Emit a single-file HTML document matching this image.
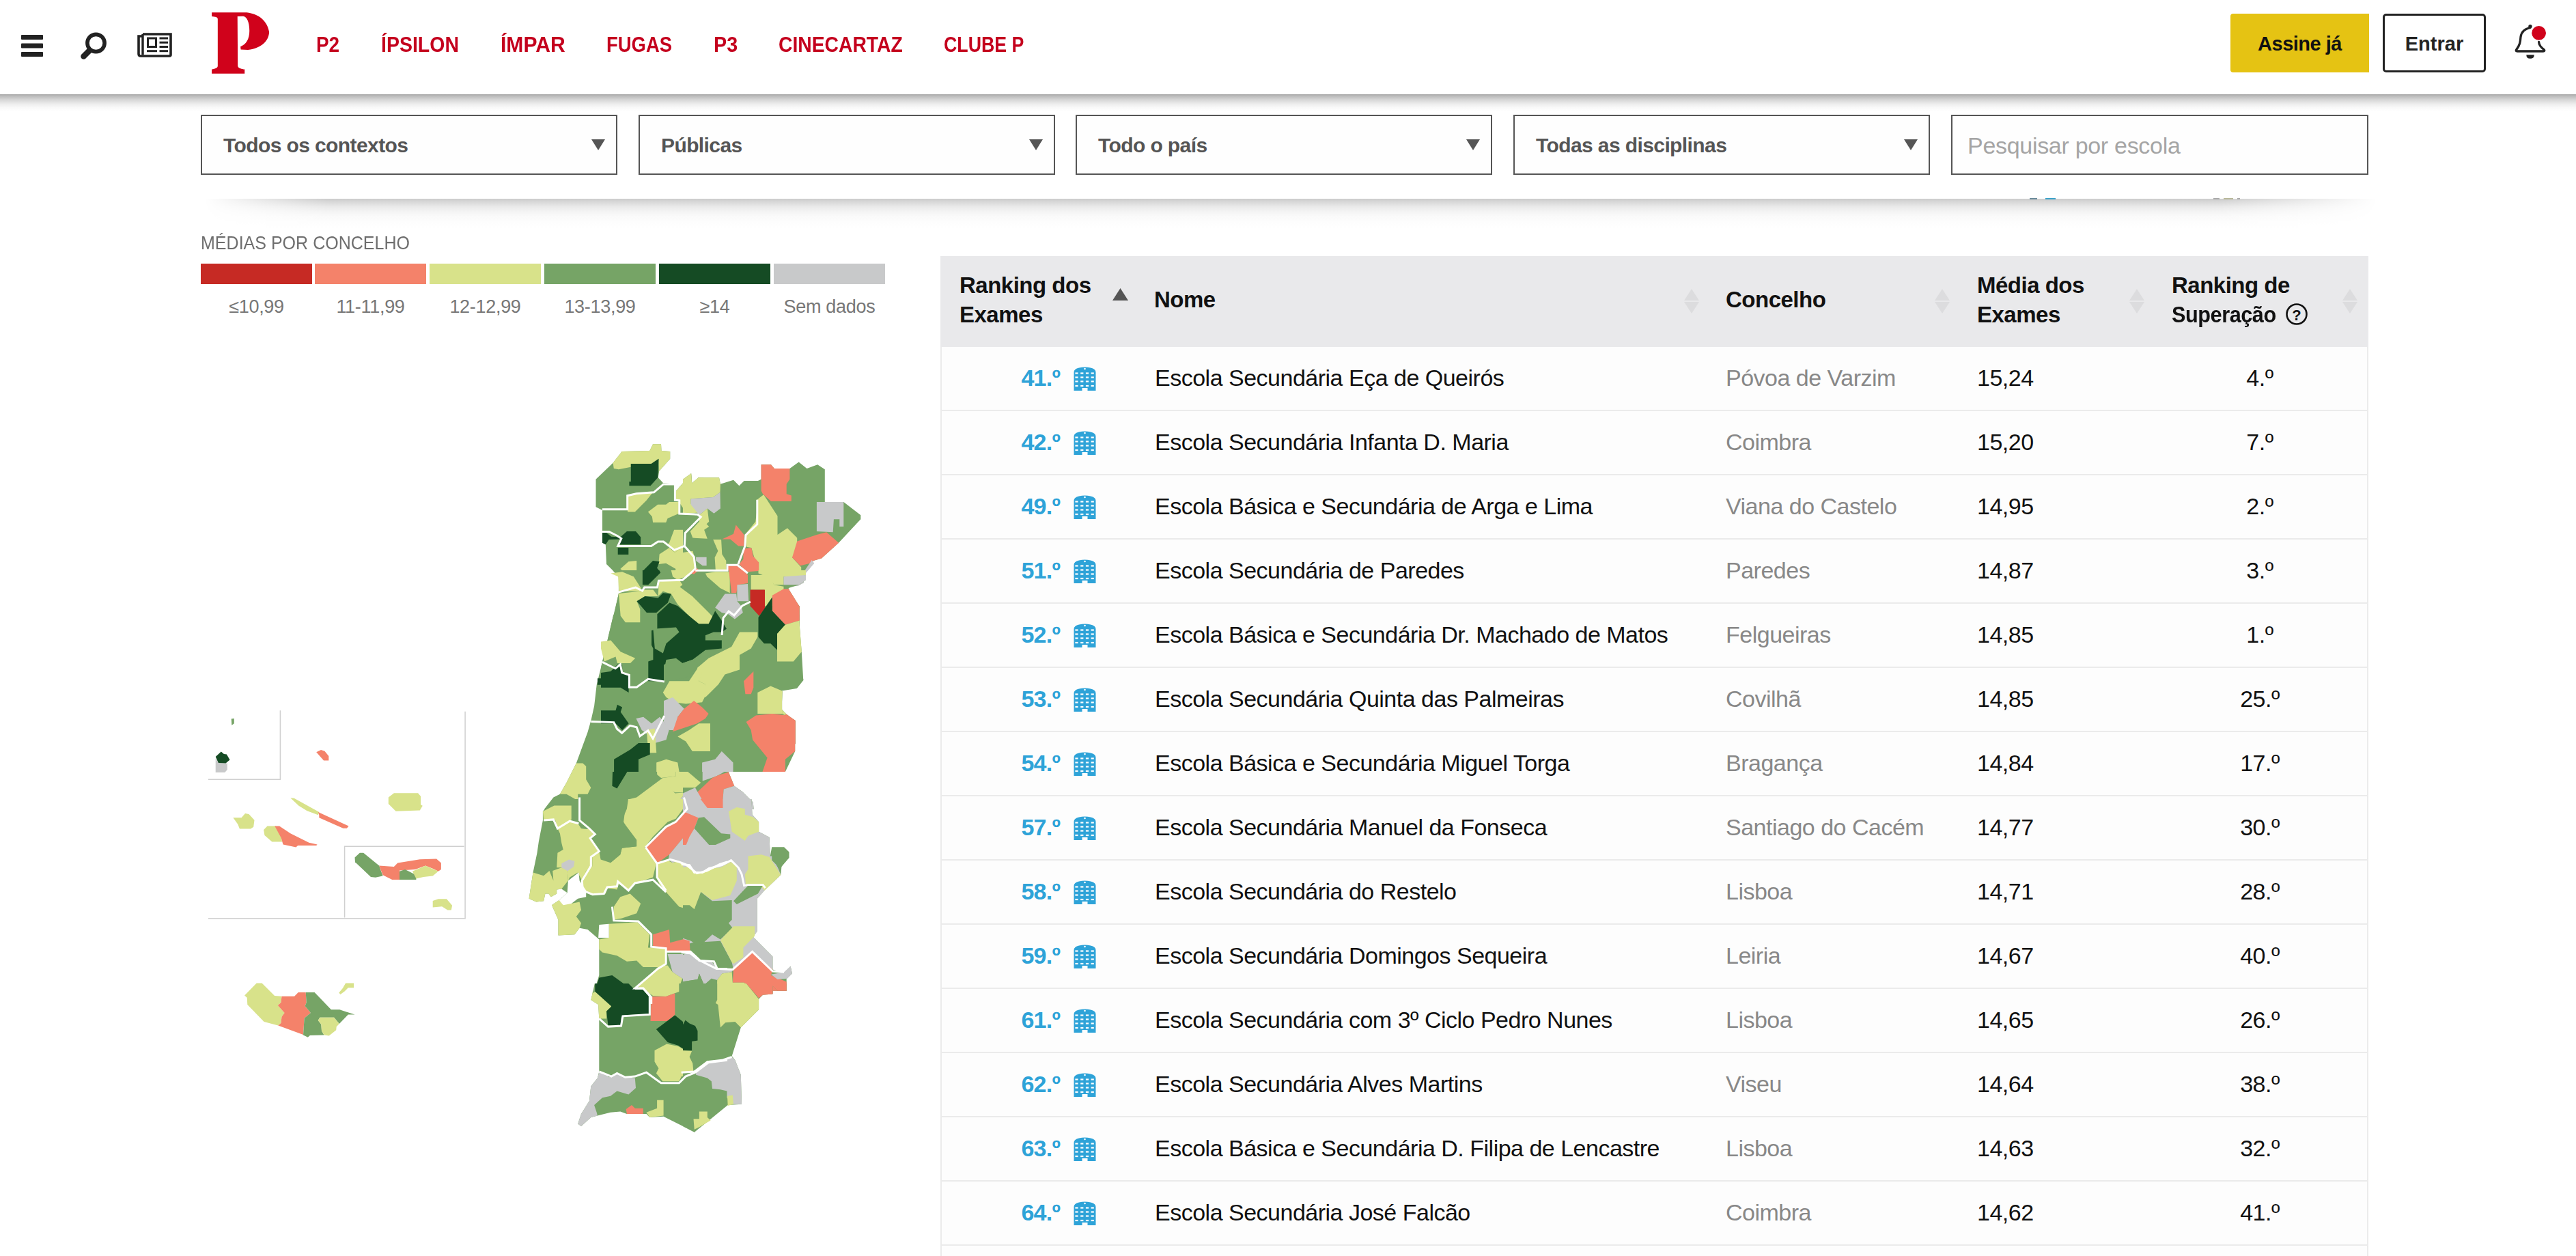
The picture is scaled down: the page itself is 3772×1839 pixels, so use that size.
<!DOCTYPE html>
<html><head><meta charset="utf-8">
<style>
*{margin:0;padding:0;box-sizing:border-box}
html,body{width:3772px;height:1839px;overflow:hidden;background:#fff;font-family:"Liberation Sans",sans-serif}
.a{position:absolute}
#hdr{position:absolute;left:0;top:0;width:3772px;height:138px;background:#fff}
#hsh{position:absolute;left:0;top:138px;width:3772px;height:26px;background:linear-gradient(#a8a8a8 0,#bdbdbd 3px,#d6d6d6 8px,#ececec 14px,#f8f8f8 19px,#fff 25px)}
.nav{position:absolute;top:43px;font-size:32px;font-weight:bold;color:#c4001d;line-height:44px;white-space:nowrap;transform-origin:0 0}
.btn{position:absolute;font-weight:bold;font-size:29px;line-height:86px;text-align:center;color:#111}
.sel{position:absolute;top:168px;height:88px;width:610px;border:2px solid #555;background:#fefefe}
.sel span{position:absolute;left:31px;top:0;line-height:86px;font-size:30px;font-weight:bold;color:#555;letter-spacing:-0.6px}
.sel i{position:absolute;right:16px;top:34px;width:0;height:0;border-left:10px solid transparent;border-right:10px solid transparent;border-top:16px solid #555}
#fsh{position:absolute;left:0;top:291px;width:3772px;height:44px;-webkit-mask-image:linear-gradient(to right,transparent 300px,#000 480px,#000 3250px,transparent 3480px);background:linear-gradient(#cbcbcb 0,#d9d9d9 5px,#e8e8e8 11px,#f3f3f3 18px,#fafafa 26px,#fdfdfd 34px,#fff 44px)}
.lb{position:absolute;top:386px;height:30px;width:163px}
.ll{position:absolute;top:431px;width:163px;text-align:center;font-size:27px;color:#777;line-height:36px;letter-spacing:-0.3px}
#tbl{position:absolute;left:1377px;top:375px;width:2091px;height:1500px;border-left:2px solid #ebebeb;border-right:2px solid #ebebeb}
#th{position:absolute;left:1377px;top:375px;width:2091px;height:133px;background:#e9e9eb}
.hd{position:absolute;font-size:33px;font-weight:bold;color:#111;line-height:43px;letter-spacing:-0.5px;white-space:nowrap}
.row{position:absolute;left:1379px;width:2087px;height:94px;background:#fdfdfd;border-bottom:2px solid #ebebeb}
.row div{position:absolute;top:0;line-height:91px;font-size:34px;white-space:nowrap;letter-spacing:-0.5px}
.rk{right:0;width:0}
.c1{left:0;width:173px;text-align:right;color:#2ea3d8;font-weight:bold;letter-spacing:-0.8px!important}
.c2{left:312px;color:#111}
.c3{left:1148px;color:#888}
.c4{left:1516px;color:#111}
.c5{left:1840px;width:180px;text-align:center;color:#111}
.ic{position:absolute;left:193px;top:29px}
.sa{position:absolute}
</style></head><body>
<div id="hdr">
 <svg class="a" style="left:0;top:0" width="420" height="138" viewBox="0 0 420 138">
  <rect x="31" y="51" width="32" height="7" rx="1" fill="#222"/>
  <rect x="31" y="63.5" width="32" height="7" rx="1" fill="#222"/>
  <rect x="31" y="76" width="32" height="7" rx="1" fill="#222"/>
  <circle cx="140.5" cy="63" r="12.6" fill="none" stroke="#222" stroke-width="5.6"/>
  <line x1="122.5" y1="82.5" x2="131" y2="74" stroke="#222" stroke-width="8.5" stroke-linecap="round"/>
  <path d="M209 50 H250 V80 Q250 82 248 82 H206 Q203 82 203 79 V53 H209" fill="none" stroke="#222" stroke-width="3.6"/>
  <line x1="209" y1="50" x2="209" y2="80" stroke="#222" stroke-width="3.4"/>
  <rect x="216.5" y="56" width="12" height="12.5" fill="none" stroke="#222" stroke-width="3"/>
  <rect x="233.5" y="54.5" width="12.5" height="3" fill="#222"/>
  <rect x="233.5" y="60.7" width="12.5" height="3" fill="#222"/>
  <rect x="233.5" y="67" width="12.5" height="3" fill="#222"/>
  <rect x="233.5" y="73.2" width="12.5" height="3" fill="#222"/>
  <rect x="215" y="73.2" width="15" height="3" fill="#222"/>
 </svg>
 <svg class="a" style="left:300px;top:10px" width="110" height="110" viewBox="0 0 1256 1256">
  <path fill="#d0021b" d="M115 95 H700 C900 120 1040 230 1075 420 C1070 560 960 690 720 720 L600 715 L595 665 C690 630 745 540 745 400 C745 250 700 165 640 158 L545 160 L550 990 C560 1030 620 1040 665 1045 L665 1115 H115 V1045 C180 1035 210 1020 215 990 V200 C210 175 180 165 115 160 Z"/>
 </svg>
 <div class="nav" style="left:463.0px;transform:scaleX(0.8718)">P2</div>
 <div class="nav" style="left:558.0px;transform:scaleX(0.8906)">ÍPSILON</div>
 <div class="nav" style="left:733.0px;transform:scaleX(0.9406)">ÍMPAR</div>
 <div class="nav" style="left:888.0px;transform:scaleX(0.8571)">FUGAS</div>
 <div class="nav" style="left:1045.0px;transform:scaleX(0.8974)">P3</div>
 <div class="nav" style="left:1140.0px;transform:scaleX(0.8835)">CINECARTAZ</div>
 <div class="nav" style="left:1382.0px;transform:scaleX(0.8357)">CLUBE P</div>
 <div class="btn" style="left:3266px;top:20px;width:203px;height:86px;background:#e5c313;border-radius:4px 0 0 4px;letter-spacing:-0.5px;line-height:88px">Assine já</div>
 <div class="btn" style="left:3489px;top:20px;width:151px;height:86px;border:3px solid #222;border-radius:5px;line-height:83px;color:#222">Entrar</div>
 <svg class="a" style="left:3670px;top:30px" width="70" height="64" viewBox="0 0 70 64">
  <path d="M35 10.5 C28 12 22 16 21 24 C20.5 31 20 36 14.5 43 Q13.5 45 16 45 H54 Q56.5 45 55.5 43 C51.5 40 47.8 37 47.6 31.5" fill="none" stroke="#222" stroke-width="3.3" stroke-linejoin="round" stroke-linecap="round"/>
  <circle cx="35" cy="8.6" r="2.7" fill="#222"/>
  <path d="M29.3 50.2 H40.8 Q40.8 55.8 35 55.8 Q29.3 55.8 29.3 50.2Z" fill="#222"/>
  <circle cx="47.6" cy="18.3" r="10.4" fill="#d0021b"/>
 </svg>
</div>
<div id="hsh"></div>

<div class="sel" style="left:294px"><span>Todos os contextos</span><i></i></div>
<div class="sel" style="left:935px"><span>Públicas</span><i></i></div>
<div class="sel" style="left:1575px"><span>Todo o país</span><i></i></div>
<div class="sel" style="left:2216px"><span>Todas as disciplinas</span><i></i></div>
<div class="sel" style="left:2857px;width:611px"><span style="font-weight:normal;color:#a5a5a5;font-size:34px;left:22px;letter-spacing:-0.3px">Pesquisar por escola</span></div>
<div id="fsh"></div>
<div class="a" style="left:2972px;top:290px;width:11px;height:2px;background:#6a8a9a"></div><div class="a" style="left:2995px;top:290px;width:15px;height:2px;background:#3aa0c8"></div><div class="a" style="left:3241px;top:290px;width:9px;height:2px;background:#aaa"></div><div class="a" style="left:3256px;top:290px;width:14px;height:2px;background:#b8b89a"></div><div class="a" style="left:3276px;top:290px;width:4px;height:2px;background:#aaa"></div>

<!-- legend -->
<div class="a" style="left:294px;top:338px;font-size:28px;color:#6e6e6e;line-height:36px;transform:scaleX(0.894);transform-origin:0 0">MÉDIAS POR CONCELHO</div>
<div class="lb" style="left:294px;background:#c62a24"></div>
<div class="lb" style="left:461px;background:#f4826a"></div>
<div class="lb" style="left:629px;background:#d8e28a"></div>
<div class="lb" style="left:797px;background:#76a466"></div>
<div class="lb" style="left:965px;background:#154b24"></div>
<div class="lb" style="left:1133px;background:#c8c9ca"></div>
<div class="ll" style="left:294px">≤10,99</div>
<div class="ll" style="left:461px">11-11,99</div>
<div class="ll" style="left:629px">12-12,99</div>
<div class="ll" style="left:797px">13-13,99</div>
<div class="ll" style="left:965px">≥14</div>
<div class="ll" style="left:1133px">Sem dados</div>

<!-- MAP -->
<svg id="map" class="a" style="left:0;top:0" width="1360" height="1839" viewBox="0 0 1360 1839"><clipPath id="c0"><rect x="765" y="630" width="265" height="285"/></clipPath>
<clipPath id="c1"><rect x="1000" y="630" width="300" height="285"/></clipPath>
<clipPath id="c2"><rect x="765" y="900" width="265" height="285"/></clipPath>
<clipPath id="c3"><rect x="1000" y="900" width="300" height="285"/></clipPath>
<clipPath id="c4"><rect x="765" y="1170" width="265" height="285"/></clipPath>
<clipPath id="c5"><rect x="1000" y="1170" width="300" height="285"/></clipPath>
<clipPath id="c6"><rect x="765" y="1440" width="265" height="300"/></clipPath>
<clipPath id="c7"><rect x="1000" y="1440" width="300" height="300"/></clipPath>
<clipPath id="c8"><rect x="880" y="835" width="300" height="295"/></clipPath>
<g clip-path="url(#c0)"><polygon fill="#76a466" points="891.6,930.0 898.8,902.3 905.9,868.9 905.9,845.0 897.6,835.4 888.0,825.9 886.8,797.2 882.0,794.8 882.0,779.3 882.0,747.0 872.5,742.3 872.5,701.7 897.6,677.8 910.7,661.1 951.3,659.9 956.1,650.3 968.0,650.3 968.5,659.9 981.2,661.1 981.2,671.8 965.2,689.7 963.7,699.3 970.9,706.9 988.3,708.8 988.3,720.8 1012.2,693.3 1013.4,708.8 1023.0,699.3 1054.0,699.3 1065.0,707.6 1065.0,930.0"/><polygon fill="#d8e28a" points="897.6,677.8 910.7,661.1 951.3,659.9 956.1,650.3 968.0,650.3 968.5,659.9 981.2,661.1 981.2,671.8 965.2,689.7 964.4,671.8 953.7,679.0 923.8,679.0 923.8,683.7 905.9,687.3 898.8,686.1"/><polygon fill="#154b24" points="923.8,679.0 953.7,679.0 964.4,671.8 963.2,699.3 952.5,711.2 921.4,711.2 921.4,705.2 923.8,705.2"/><polygon fill="#d8e28a" points="917.9,726.7 932.2,722.0 956.1,720.8 946.5,732.7 929.8,749.4 919.1,749.4"/><polygon fill="#d8e28a" points="948.9,749.4 963.2,738.7 975.2,738.7 980.0,735.1 994.3,735.1 994.3,751.8 977.6,759.0 975.2,765.0 956.1,765.0 954.9,756.6"/><polygon fill="#d8e28a" points="989.5,719.6 1012.2,693.3 1013.4,708.8 1023.0,699.3 1054.0,699.3 1054.0,720.8 1043.3,730.3 1011.0,730.3 1011.0,742.3 1018.2,749.4 1003.9,749.4 994.3,735.1 989.5,730.3"/><polygon fill="#c8c9ca" points="1011.0,729.1 1043.3,729.1 1054.0,720.8 1055.2,742.3 1034.9,754.2 1023.0,754.2 1011.0,742.3"/><polygon fill="#d8e28a" points="1025.3,754.2 1034.9,744.6 1038.5,766.1 1032.5,773.3 1037.3,787.6 1018.2,788.8 1009.8,775.7 1003.9,770.9"/><polygon fill="#d8e28a" points="980.0,794.8 987.1,775.7 1000.3,775.7 1001.5,782.9 1000.3,799.6 988.3,809.1 977.6,797.2"/><polygon fill="#d8e28a" points="965.6,811.5 980.0,802.0 988.3,809.1 1000.3,799.6 1015.8,818.7 1014.6,833.0 1003.9,845.0 984.7,847.4 989.5,833.0 975.2,824.7 964.4,825.9"/><polygon fill="#d8e28a" points="908.3,833.0 920.3,822.3 932.2,821.1 932.2,840.2 920.3,842.6"/><polygon fill="#154b24" points="882.0,780.0 888.0,780.0 895.2,785.7 909.5,786.4 909.5,789.6 891.6,790.0 886.8,797.2 882.0,794.8"/><polygon fill="#154b24" points="908.3,786.4 917.9,778.1 931.0,778.1 938.2,786.4 938.2,797.2 907.1,797.2"/><polygon fill="#154b24" points="904.7,802.0 920.3,802.0 920.3,812.0 904.7,812.0"/><polygon fill="#154b24" points="941.8,835.4 956.1,821.1 965.6,822.3 962.1,831.8 968.0,839.0 951.3,855.7 941.8,855.7"/><polygon fill="#d8e28a" points="905.9,868.9 909.5,866.5 927.4,859.3 937.0,871.2 932.2,876.0 937.0,883.2 937.0,902.3 920.3,902.3 898.8,902.3"/><polygon fill="#d8e28a" points="942.9,859.3 963.2,859.3 963.2,876.0 942.9,876.0"/><polygon fill="#d8e28a" points="965.6,852.1 975.2,849.7 1003.9,849.7 1027.7,859.3 1034.9,868.9 1046.8,883.2 1027.7,892.7 1003.9,892.7 980.0,883.2"/><polygon fill="#c8c9ca" points="1046.8,885.6 1065.0,878.4 1065.0,899.9 1051.6,897.5"/><polygon fill="#f4826a" points="1011.0,837.8 1018.2,831.8 1023.0,833.0 1015.8,841.4"/></g>
<g clip-path="url(#c1)"><polygon fill="#76a466" points="997.6,930.0 997.6,708.8 1000.0,701.7 1011.9,693.3 1013.1,707.6 1022.7,699.3 1053.0,699.3 1054.9,708.8 1074.0,702.8 1082.4,711.2 1089.6,704.0 1109.9,704.0 1114.6,701.7 1114.6,680.2 1129.0,680.2 1133.8,686.1 1156.4,686.1 1169.6,676.6 1181.5,686.1 1197.1,680.2 1207.8,687.3 1207.8,735.1 1235.3,735.1 1260.3,754.2 1260.3,760.2 1228.1,794.8 1203.0,817.5 1191.1,821.1 1176.8,837.8 1176.8,853.3 1167.2,858.1 1146.9,858.1 1146.9,861.7 1154.8,861.7 1155.3,871.2 1170.8,887.5 1170.8,930.0"/><polygon fill="#d8e28a" points="1000.0,701.7 1011.9,693.3 1013.1,707.6 1022.7,699.3 1053.0,699.3 1054.9,708.8 1054.5,720.8 1044.2,727.9 1011.5,730.3 1011.5,737.5 1023.9,750.6 1000.0,751.8"/><polygon fill="#c8c9ca" points="1011.5,730.3 1044.2,727.9 1054.5,720.8 1054.9,744.6 1045.4,751.8 1035.8,744.6 1023.9,754.2 1011.5,738.7"/><polygon fill="#d8e28a" points="1023.9,754.2 1035.8,744.6 1038.2,763.8 1034.6,767.3 1038.2,770.9 1031.1,775.7 1035.8,788.8 1014.3,787.6 1010.7,778.1 1023.9,763.8"/><polygon fill="#f4826a" points="1057.3,789.6 1074.0,781.7 1077.6,768.5 1089.6,782.9 1089.6,799.6 1081.2,799.6 1069.3,789.6"/><polygon fill="#d8e28a" points="1108.7,731.5 1118.2,724.3 1138.5,755.4 1138.5,782.9 1152.9,773.3 1167.2,787.6 1167.2,811.5 1160.0,816.3 1173.2,830.6 1173.2,845.0 1167.2,858.1 1146.9,858.1 1132.6,858.1 1132.6,845.0 1121.8,839.0 1111.1,839.0 1111.1,823.5 1105.1,818.7 1100.3,802.0 1093.2,800.8 1090.8,782.9 1106.3,763.8 1108.7,744.6"/><polygon fill="#f4826a" points="1114.6,680.2 1129.0,680.2 1133.8,686.1 1156.4,686.1 1156.4,701.7 1151.7,708.8 1151.7,723.2 1158.8,725.5 1158.8,733.9 1129.0,733.9 1117.0,723.2 1114.6,718.4"/><polygon fill="#c8c9ca" points="1195.9,735.1 1235.3,735.1 1235.3,770.9 1229.3,770.9 1229.3,760.2 1220.9,760.2 1219.7,779.3 1195.9,778.1"/><polygon fill="#f4826a" points="1167.2,792.4 1195.9,782.9 1210.2,779.3 1228.1,794.8 1203.0,817.5 1191.1,821.1 1186.3,824.7 1172.0,828.2 1160.0,816.3"/><polygon fill="#c8c9ca" points="1188.7,819.9 1192.3,824.7 1177.9,841.4 1176.8,853.3 1168.4,858.1 1146.9,858.1 1146.9,846.2 1167.2,845.0 1176.8,837.8"/><polygon fill="#f4826a" points="1088.4,803.2 1100.3,802.0 1102.7,813.9 1111.1,823.5 1111.1,837.8 1093.2,837.8 1082.4,825.9 1088.4,818.7"/><polygon fill="#c8c9ca" points="1019.1,815.8 1034.6,815.8 1034.6,828.2 1028.7,828.2 1019.1,821.1"/><polygon fill="#d8e28a" points="1000.0,809.1 1014.3,806.8 1017.9,818.7 1017.9,831.8 1000.0,845.0"/><polygon fill="#d8e28a" points="1044.2,790.0 1056.1,790.0 1057.3,811.5 1063.3,821.1 1063.3,834.2 1047.8,834.2 1046.6,816.3 1051.4,806.8"/><polygon fill="#f4826a" points="1010.7,840.2 1017.9,831.8 1022.7,833.0 1015.5,841.4"/><polygon fill="#d8e28a" points="1034.6,837.8 1069.3,837.8 1069.3,865.3 1054.9,865.3 1034.6,849.7"/><polygon fill="#f4826a" points="1065.7,828.2 1078.8,828.2 1095.5,840.2 1095.5,854.5 1078.8,855.7 1078.8,867.7 1070.5,867.7 1066.9,845.0"/><polygon fill="#c8c9ca" points="1078.8,855.7 1095.5,854.5 1095.5,880.8 1082.4,883.2 1088.4,891.5 1076.4,899.9 1064.5,891.5 1054.9,897.5 1047.8,890.3 1062.1,883.2 1063.3,868.9 1078.8,867.7"/><polygon fill="#d8e28a" points="1099.1,840.2 1121.8,840.2 1132.6,850.9 1133.8,859.3 1146.9,859.3 1146.9,871.2 1130.2,872.4 1120.6,882.0 1119.4,864.1 1099.1,864.1"/><polygon fill="#c62a24" points="1099.1,864.1 1119.4,864.1 1119.4,892.7 1111.1,901.1 1097.9,888.0"/><polygon fill="#154b24" points="1111.1,901.1 1119.4,892.7 1130.2,873.6 1131.4,895.1 1149.3,914.2 1133.8,930.0 1111.1,930.0"/><polygon fill="#f4826a" points="1130.2,872.4 1146.9,871.2 1148.1,861.7 1155.3,861.7 1155.3,871.2 1170.8,888.0 1170.8,907.1 1149.3,914.2 1131.4,895.1"/><polygon fill="#d8e28a" points="1149.3,914.2 1170.8,907.1 1170.8,930.0 1133.8,930.0"/><polygon fill="#d8e28a" points="997.6,866.5 1016.7,868.9 1026.3,868.9 1045.4,888.0 1047.8,892.7 1033.4,899.9 1035.8,911.8 1031.1,911.8 1023.9,897.5 1008.4,911.8 997.6,907.1"/><polygon fill="#154b24" points="997.6,907.1 1008.4,911.8 1023.9,897.5 1031.1,911.8 1043.0,895.1 1051.4,895.1 1059.7,919.0 1059.7,930.0 997.6,930.0"/></g>
<g clip-path="url(#c2)"><polygon fill="#76a466" points="898.8,897.6 1065.0,897.6 1065.0,1200.0 788.9,1200.0 793.7,1189.0 810.4,1167.5 819.9,1162.7 829.5,1146.0 843.8,1117.4 860.5,1072.0 865.3,1055.3 870.1,1033.8 873.7,1002.7 882.0,969.3"/><polygon fill="#d8e28a" points="889.2,939.4 908.3,956.1 922.6,957.3 929.8,963.3 923.8,971.7 903.5,971.7 902.3,957.3 885.6,956.1"/><polygon fill="#d8e28a" points="917.9,897.6 937.0,897.6 937.0,910.7 920.3,910.7"/><polygon fill="#154b24" points="874.9,993.2 895.2,993.2 905.9,981.2 905.9,974.0 909.5,974.0 910.7,986.0 920.3,989.6 920.3,1014.6 908.3,1007.5 903.5,1002.7 874.9,1002.7"/><polygon fill="#154b24" points="880.8,1040.9 897.6,1040.9 901.1,1031.4 909.5,1038.5 909.5,1049.3 920.3,1060.0 910.7,1067.2 902.3,1055.3 895.2,1055.3 880.8,1054.1"/><polygon fill="#154b24" points="963.2,897.6 1003.9,897.6 1009.8,909.6 997.9,919.1 965.6,919.1"/><polygon fill="#154b24" points="990.7,928.7 1011.0,910.7 1030.1,897.6 1061.2,897.6 1061.2,914.3 1048.0,923.9 1056.4,935.8 1056.4,950.2 1018.2,950.2 1005.0,953.7 989.5,971.7 972.3,971.7 972.3,997.9 950.1,997.9 948.9,966.9 953.7,950.2 965.6,958.5 975.2,940.6 990.7,940.6"/><polygon fill="#d8e28a" points="970.4,1017.0 980.0,1000.3 989.5,990.8 1006.2,988.4 1021.8,969.3 1034.9,959.7 1065.0,947.8 1065.0,978.8 1055.2,984.8 1055.2,1000.3 1034.9,1007.5 1032.5,1019.4 1015.8,1033.8 999.1,1033.8 994.3,1024.2 975.2,1024.2"/><polygon fill="#c8c9ca" points="972.8,1024.2 994.3,1024.2 1001.5,1038.5 991.9,1045.7 987.1,1069.6 978.8,1067.2 972.8,1050.5"/><polygon fill="#f4826a" points="991.9,1045.7 1003.9,1036.1 1015.8,1025.4 1025.3,1030.2 1036.1,1042.1 1032.5,1049.3 1027.7,1048.1 1027.7,1062.4 1013.4,1067.2 984.7,1070.8"/><polygon fill="#c8c9ca" points="932.2,1050.5 946.5,1050.5 956.1,1060.0 965.6,1050.5 972.8,1048.1 981.2,1074.4 968.0,1088.7 956.1,1086.3 948.9,1072.0 939.4,1079.1 932.2,1062.4"/><polygon fill="#d8e28a" points="953.7,1057.6 962.1,1055.3 963.2,1088.7 956.1,1098.2 948.9,1098.2 947.7,1076.8"/><polygon fill="#d8e28a" points="989.5,1076.8 1003.9,1067.2 1027.7,1062.4 1039.7,1060.0 1039.7,1086.3 1020.6,1086.3 1020.6,1099.4 1011.0,1099.4 994.3,1086.3"/><polygon fill="#154b24" points="921.4,1093.5 937.0,1091.1 951.3,1086.3 951.3,1098.2 939.4,1113.8 929.8,1113.8 921.4,1103.0"/><polygon fill="#154b24" points="897.6,1110.2 908.3,1110.2 922.6,1098.2 932.2,1116.2 932.2,1126.9 920.3,1126.9 903.5,1154.4 896.4,1150.8"/><polygon fill="#d8e28a" points="962.1,1118.5 975.2,1111.4 989.5,1116.2 989.5,1136.5 968.0,1138.9 962.1,1134.1"/><polygon fill="#c8c9ca" points="1028.9,1115.0 1055.2,1100.6 1065.0,1098.2 1065.0,1124.5 1046.8,1141.2 1030.1,1146.0"/><polygon fill="#d8e28a" points="989.5,1116.2 1003.9,1117.4 1025.3,1143.6 1003.9,1160.3 988.3,1160.3 970.4,1148.4 970.4,1138.9 989.5,1136.5"/><polygon fill="#d8e28a" points="913.1,1172.3 932.2,1167.5 951.3,1153.2 970.4,1138.9 988.3,1161.5 1003.9,1160.3 996.7,1169.9 1003.9,1179.5 991.9,1200.0 913.1,1200.0"/><polygon fill="#c8c9ca" points="996.7,1169.9 1003.9,1160.3 1018.2,1153.2 1034.9,1148.4 1065.0,1162.7 1065.0,1200.0 991.9,1200.0 1003.9,1179.5"/><polygon fill="#f4826a" points="1018.2,1162.7 1034.9,1148.4 1051.6,1134.1 1065.0,1124.5 1065.0,1177.1 1051.6,1186.6 1037.3,1177.1 1023.0,1172.3"/><polygon fill="#f4826a" points="994.3,1200.0 1003.9,1189.0 1015.8,1193.8 1023.0,1200.0"/><polygon fill="#d8e28a" points="843.8,1117.4 853.4,1117.4 858.2,1122.1 858.2,1141.2 865.3,1153.2 860.5,1162.7 846.2,1162.7 846.2,1172.3 829.5,1162.7 819.9,1162.7 829.5,1146.0"/><polygon fill="#d8e28a" points="793.7,1189.0 810.4,1174.7 815.2,1179.5 827.1,1186.6 824.7,1200.0 788.9,1200.0"/></g>
<g clip-path="url(#c3)"><polygon fill="#76a466" points="997.6,897.6 1170.8,897.6 1170.8,954.9 1173.9,958.5 1164.8,968.1 1164.8,980.0 1176.8,995.5 1167.2,1007.5 1136.1,1007.5 1125.4,1000.3 1125.4,1008.7 1145.7,1012.3 1144.5,1038.5 1151.7,1045.7 1164.8,1055.3 1164.8,1088.7 1150.5,1100.6 1150.5,1126.9 1072.8,1126.9 1066.9,1130.5 1075.2,1150.8 1087.2,1159.2 1102.7,1174.7 1105.1,1200.0 997.6,1200.0"/><polygon fill="#154b24" points="997.6,897.6 1057.3,897.6 1057.3,914.3 1063.3,919.1 1059.7,923.9 1063.3,931.1 1057.3,935.8 1057.3,952.5 1035.8,957.3 1014.3,949.0 997.6,957.3"/><polygon fill="#76a466" points="1031.1,931.1 1059.7,925.1 1062.1,933.4 1056.1,938.2 1031.1,938.2"/><polygon fill="#d8e28a" points="1028.7,897.6 1039.4,897.6 1039.4,914.3 1031.1,914.3"/><polygon fill="#154b24" points="1111.1,897.6 1133.8,897.6 1149.3,914.3 1138.5,926.3 1138.5,951.4 1124.2,940.6 1119.4,944.2 1111.1,931.1"/><polygon fill="#f4826a" points="1133.8,897.6 1170.8,897.6 1170.8,908.4 1149.3,914.3"/><polygon fill="#d8e28a" points="1149.3,914.3 1170.8,908.4 1170.8,954.9 1173.9,958.5 1164.8,968.1 1138.5,968.1 1138.5,926.3"/><polygon fill="#d8e28a" points="1080.0,925.1 1111.1,925.1 1111.1,931.1 1119.4,944.2 1082.4,958.5 1082.4,978.8 1057.3,978.8 1057.3,954.9 1069.3,947.8"/><polygon fill="#d8e28a" points="997.6,983.6 1020.3,971.7 1028.7,960.9 1043.0,953.7 1082.4,957.3 1082.4,977.6 1057.3,977.6 1056.1,997.9 1031.1,1020.6 1026.3,1024.2 1014.3,1029.0 997.6,1040.9"/><polygon fill="#f4826a" points="997.6,1040.9 1014.3,1026.6 1023.9,1030.2 1035.8,1040.9 1035.8,1048.1 1028.7,1049.3 1026.3,1062.4 997.6,1069.6"/><polygon fill="#d8e28a" points="997.6,1072.0 1026.3,1062.4 1039.4,1061.2 1039.4,1087.5 1021.5,1088.7 1020.3,1100.6 997.6,1100.6"/><polygon fill="#f4826a" points="1088.4,996.7 1102.7,984.8 1102.7,1005.1 1097.9,1009.9 1099.1,1014.6 1092.0,1017.0"/><polygon fill="#d8e28a" points="1125.4,1000.3 1136.1,1007.5 1145.7,1012.3 1144.5,1038.5 1151.7,1045.7 1143.3,1049.3 1129.0,1045.7 1114.6,1049.3 1102.7,1045.7 1108.7,1029.0 1108.7,1012.3"/><polygon fill="#f4826a" points="1093.2,1052.9 1102.7,1046.9 1114.6,1049.3 1129.0,1045.7 1143.3,1049.3 1151.7,1045.7 1164.8,1055.3 1164.8,1088.7 1150.5,1100.6 1150.5,1126.9 1111.1,1126.9 1125.4,1110.2 1100.3,1098.2 1100.3,1072.0 1093.2,1064.8"/><polygon fill="#c8c9ca" points="1028.7,1116.2 1054.9,1100.6 1056.1,1116.2 1072.8,1116.2 1072.8,1126.9 1062.1,1129.3 1051.4,1135.3 1045.4,1137.7 1028.7,1143.6"/><polygon fill="#d8e28a" points="997.6,1122.1 1026.3,1146.0 1017.9,1153.2 997.6,1153.2"/><polygon fill="#f4826a" points="1017.9,1162.7 1043.0,1138.9 1051.4,1135.3 1066.9,1130.5 1075.2,1150.8 1059.7,1155.6 1057.3,1184.2 1035.8,1184.2 1031.1,1172.3"/><polygon fill="#c8c9ca" points="997.6,1162.7 1017.9,1153.2 1035.8,1184.2 1057.3,1184.2 1059.7,1155.6 1075.2,1150.8 1087.2,1159.2 1102.7,1174.7 1105.1,1200.0 997.6,1200.0"/><polygon fill="#d8e28a" points="1066.9,1191.4 1078.8,1181.8 1086.0,1185.4 1105.1,1196.2 1105.1,1200.0 1064.5,1200.0"/><polygon fill="#f4826a" points="997.6,1189.0 1021.5,1200.0 997.6,1200.0"/></g>
<g clip-path="url(#c4)"><polygon fill="#76a466" points="811.6,1167.6 1065.0,1167.6 1065.0,1470.0 870.1,1470.0 871.3,1447.1 877.3,1428.0 877.3,1375.4 860.5,1361.1 848.6,1358.7 841.4,1368.2 817.5,1369.4 817.5,1346.8 808.0,1325.3 818.7,1318.1 830.7,1307.3 822.3,1301.4 815.2,1302.6 815.2,1308.5 806.8,1313.3 803.2,1308.5 798.4,1308.5 796.1,1319.3 785.3,1320.5 774.6,1315.7 780.5,1277.5 786.5,1248.8 788.9,1232.1 794.9,1201.1 794.9,1187.9"/><polygon fill="#d8e28a" points="794.9,1187.9 811.6,1179.6 836.7,1179.6 836.7,1199.9 824.7,1208.2 816.4,1213.0 812.8,1199.9 796.1,1201.1"/><polygon fill="#d8e28a" points="816.4,1213.0 834.3,1201.1 846.2,1205.8 851.0,1213.0 865.3,1214.2 871.3,1221.4 864.1,1227.3 877.3,1246.4 867.7,1252.4 867.7,1267.9 858.2,1275.1 852.2,1289.4 846.2,1277.5 834.3,1284.6 831.9,1289.4 830.7,1275.1 822.3,1270.3 815.2,1270.3 816.4,1248.8 824.7,1244.0 822.3,1234.5 819.9,1220.2"/><polygon fill="#c8c9ca" points="822.3,1264.3 833.1,1258.4 841.4,1260.8 840.2,1269.1 829.5,1276.3 822.3,1270.3"/><polygon fill="#d8e28a" points="774.6,1315.7 780.5,1277.5 796.1,1282.3 804.4,1275.1 810.4,1289.4 809.2,1275.1 822.3,1270.3 830.7,1275.1 831.9,1289.4 822.3,1301.4 815.2,1302.6 815.2,1308.5 806.8,1313.3 803.2,1308.5 798.4,1308.5 796.1,1319.3 785.3,1320.5"/><polygon fill="#d8e28a" points="913.1,1167.6 1000.3,1167.6 1003.9,1179.6 989.5,1198.7 977.6,1203.4 956.1,1224.9 944.1,1240.5 960.9,1264.3 956.1,1284.6 927.4,1294.2 920.3,1302.6 905.9,1294.2 903.5,1302.6 889.2,1300.2 886.8,1308.5 868.9,1309.7 855.8,1306.1 852.2,1289.4 858.2,1275.1 867.7,1267.9 867.7,1252.4 877.3,1246.4 884.4,1253.6 894.0,1263.2 908.3,1251.2 910.7,1241.7 932.2,1239.3 913.1,1203.4 915.5,1184.3"/><polygon fill="#76a466" points="847.4,1193.9 851.0,1177.2 860.5,1167.6 920.3,1167.6 917.9,1184.3 910.7,1201.1 932.2,1229.7 932.2,1239.3 910.7,1241.7 908.3,1251.2 894.0,1263.2 879.6,1258.4 877.3,1246.4 864.1,1227.3 871.3,1221.4 865.3,1214.2 851.0,1213.0 847.4,1201.1"/><polygon fill="#f4826a" points="945.3,1240.5 975.2,1210.6 989.5,1203.4 1006.2,1185.5 1023.0,1197.5 1018.2,1215.4 1003.9,1222.5 980.0,1251.2 963.2,1263.2"/><polygon fill="#c8c9ca" points="1001.5,1167.6 1065.0,1167.6 1065.0,1220.2 1056.4,1220.2 1023.0,1197.5 1006.2,1185.5"/><polygon fill="#f4826a" points="1023.0,1167.6 1058.8,1167.6 1058.8,1179.6 1042.1,1183.1 1034.9,1183.1"/><polygon fill="#76a466" points="1023.0,1197.5 1056.4,1220.2 1065.0,1220.2 1065.0,1227.3 1046.8,1236.9 1037.3,1234.5 1018.2,1215.4"/><polygon fill="#c8c9ca" points="980.0,1251.2 1003.9,1222.5 1018.2,1215.4 1037.3,1234.5 1065.0,1227.3 1065.0,1265.5 1054.0,1265.5 1039.7,1270.3 1034.9,1275.1 1020.6,1277.5 1003.9,1265.5 994.3,1260.8 984.7,1263.2 978.8,1258.4"/><polygon fill="#d8e28a" points="963.2,1265.5 975.2,1258.4 984.7,1263.2 994.3,1260.8 1003.9,1265.5 1020.6,1278.7 1034.9,1275.1 1054.0,1265.5 1065.0,1265.5 1065.0,1310.9 1043.3,1320.5 1027.7,1306.1 1020.6,1325.3 1011.0,1332.4 994.3,1327.6 975.2,1306.1 965.6,1294.2 960.9,1284.6"/><polygon fill="#d8e28a" points="898.8,1327.6 908.3,1313.3 922.6,1308.5 938.2,1322.9 932.2,1337.2 910.7,1344.4 898.8,1346.8"/><polygon fill="#d8e28a" points="808.0,1325.3 818.7,1318.1 836.7,1322.9 848.6,1320.5 851.0,1332.4 843.8,1342.0 851.0,1351.5 848.6,1358.7 841.4,1368.2 817.5,1369.4 817.5,1346.8"/><polygon fill="#d8e28a" points="877.3,1368.2 877.3,1375.4 891.6,1373.0 891.6,1352.7 933.4,1350.3 951.3,1368.2 948.9,1387.4 975.2,1388.5 975.2,1408.9 970.4,1416.0 941.8,1416.0 932.2,1406.5 917.9,1407.7 903.5,1399.3 882.0,1394.5 877.3,1389.7"/><polygon fill="#f4826a" points="956.1,1368.2 980.0,1361.1 981.2,1380.2 1003.9,1374.2 1011.0,1393.3 977.6,1393.3 975.2,1387.4 956.1,1386.2"/><polygon fill="#c8c9ca" points="1011.0,1388.5 1030.1,1380.2 1046.8,1368.2 1065.0,1377.8 1065.0,1416.0 1049.2,1416.0 1025.3,1404.1"/><polygon fill="#c8c9ca" points="977.6,1396.9 1011.0,1396.9 1025.3,1406.5 1049.2,1418.4 1065.0,1418.4 1065.0,1423.2 1049.2,1428.0 1049.2,1432.7 1027.7,1442.3 1015.8,1432.7 999.1,1432.7 984.7,1423.2"/><polygon fill="#d8e28a" points="929.8,1447.1 951.3,1428.0 965.6,1413.6 977.6,1413.6 984.7,1423.2 999.1,1432.7 989.5,1459.0 951.3,1459.0"/><polygon fill="#154b24" points="872.5,1447.1 877.3,1431.5 896.4,1428.0 922.6,1447.1 941.8,1447.1 951.3,1460.2 951.3,1470.0 870.1,1470.0"/><polygon fill="#f4826a" points="953.7,1460.2 988.3,1456.6 988.3,1470.0 953.7,1470.0"/><polygon fill="#d8e28a" points="1051.6,1428.0 1065.0,1423.2 1065.0,1470.0 1051.6,1470.0"/><polygon fill="#d8e28a" points="867.7,1451.8 874.9,1449.5 877.3,1470.0 865.3,1470.0"/><polygon fill="#ffffff" points="831.9,1289.4 847.4,1277.5 848.6,1289.4 858.2,1303.8 858.2,1313.3 846.2,1315.7 836.7,1322.9 824.7,1325.3 818.7,1318.1 830.7,1307.3"/><polygon fill="#ffffff" points="877.3,1353.9 891.6,1352.7 891.6,1373.0 876.1,1373.0"/></g>
<g clip-path="url(#c5)"><polygon fill="#76a466" points="997.6,1167.6 1100.3,1167.6 1101.5,1192.7 1111.1,1203.4 1111.1,1217.8 1126.6,1226.1 1127.8,1253.6 1130.2,1240.5 1148.1,1240.5 1155.3,1247.6 1155.3,1256.0 1144.5,1267.9 1143.3,1281.1 1119.4,1303.8 1108.7,1315.7 1108.7,1363.5 1102.7,1371.8 1131.4,1400.5 1131.4,1419.6 1148.1,1424.4 1157.6,1414.8 1160.0,1425.6 1151.7,1432.7 1151.7,1450.7 1131.4,1450.7 1131.4,1456.6 1117.0,1461.4 1109.9,1470.0 997.6,1470.0"/><polygon fill="#c8c9ca" points="997.6,1167.6 1100.3,1167.6 1101.5,1192.7 1111.1,1203.4 1111.1,1217.8 1126.6,1226.1 1127.8,1253.6 1132.6,1253.6 1143.3,1281.1 1119.4,1303.8 1108.7,1315.7 1108.7,1363.5 1102.7,1371.8 1131.4,1400.5 1131.4,1419.6 1074.0,1419.6 1071.7,1408.9 1054.9,1377.8 1014.3,1380.2 997.6,1385.0"/><polygon fill="#f4826a" points="1023.9,1167.6 1058.5,1167.6 1058.5,1183.1 1043.0,1183.1 1035.8,1183.1"/><polygon fill="#f4826a" points="997.6,1186.7 1022.7,1197.5 1016.7,1213.0 1009.6,1224.9 1004.8,1236.9 997.6,1236.9"/><polygon fill="#76a466" points="1016.7,1213.0 1022.7,1197.5 1031.1,1196.3 1056.1,1220.2 1069.3,1221.4 1069.3,1227.3 1047.8,1236.9 1038.2,1236.9"/><polygon fill="#d8e28a" points="1066.9,1187.9 1078.8,1181.9 1090.8,1184.3 1090.8,1192.7 1102.7,1196.3 1111.1,1203.4 1111.1,1217.8 1095.5,1223.7 1090.8,1230.9 1071.7,1217.8"/><polygon fill="#76a466" points="1130.2,1240.5 1148.1,1240.5 1155.3,1247.6 1155.3,1256.0 1143.3,1270.3 1142.1,1275.1 1136.1,1265.5 1130.2,1259.6"/><polygon fill="#d8e28a" points="1095.5,1253.6 1114.6,1251.2 1126.6,1254.8 1133.8,1265.5 1143.3,1281.1 1119.4,1303.8 1112.3,1295.4 1092.0,1295.4 1090.8,1279.9 1095.5,1272.7"/><polygon fill="#d8e28a" points="997.6,1270.3 1009.6,1269.1 1016.7,1278.7 1028.7,1277.5 1038.2,1271.5 1054.9,1270.3 1070.5,1262.0 1078.8,1269.1 1078.8,1289.4 1069.3,1310.9 1043.0,1318.1 1026.3,1306.1 1017.9,1331.2 1009.6,1330.0 997.6,1325.3"/><polygon fill="#76a466" points="1074.0,1319.3 1095.5,1296.6 1117.0,1296.6 1109.9,1308.5 1100.3,1313.3 1078.8,1324.1"/><polygon fill="#76a466" points="997.6,1325.3 1009.6,1325.3 1016.7,1331.2 1026.3,1306.1 1043.0,1319.3 1071.7,1318.1 1071.7,1346.8 1066.9,1351.5 1072.8,1358.7 1054.9,1375.4 1043.0,1368.2 1023.9,1386.2 1011.9,1377.8 997.6,1373.0"/><polygon fill="#d8e28a" points="1054.9,1376.6 1074.0,1356.3 1105.1,1356.3 1105.1,1370.6 1088.4,1387.4 1088.4,1401.7 1074.0,1411.2 1071.7,1408.9"/><polygon fill="#f4826a" points="997.6,1374.2 1009.6,1377.8 1010.7,1393.3 997.6,1393.3"/><polygon fill="#f4826a" points="1074.0,1419.6 1101.5,1393.3 1131.4,1419.6 1129.0,1428.0 1151.7,1437.5 1151.7,1450.7 1131.4,1450.7 1131.4,1456.6 1117.0,1461.4 1089.6,1438.7 1072.8,1438.7"/><polygon fill="#c8c9ca" points="1129.0,1426.8 1148.1,1423.2 1157.6,1414.8 1160.0,1425.6 1152.9,1432.7 1138.5,1433.9"/><polygon fill="#c8c9ca" points="997.6,1399.3 1010.7,1393.3 1021.5,1406.5 1043.0,1408.9 1050.2,1418.4 1071.7,1419.6 1071.7,1423.2 1057.3,1425.6 1050.2,1435.1 1041.8,1432.7 1031.1,1442.3 1023.9,1425.6 1021.5,1433.9 997.6,1437.5"/><polygon fill="#76a466" points="997.6,1437.5 1021.5,1433.9 1023.9,1425.6 1031.1,1442.3 1041.8,1432.7 1050.2,1437.5 1050.2,1470.0 997.6,1470.0"/><polygon fill="#d8e28a" points="1050.2,1435.1 1057.3,1425.6 1071.7,1423.2 1072.8,1438.7 1089.6,1438.7 1109.9,1460.2 1109.9,1470.0 1049.0,1470.0"/></g>
<g clip-path="url(#c6)"><polygon fill="#76a466" points="871.3,1437.6 1065.0,1437.6 1065.0,1616.8 1037.3,1638.2 1017.0,1657.4 971.6,1634.7 951.3,1635.9 946.5,1631.1 917.9,1631.1 908.3,1627.5 894.0,1628.7 874.9,1633.5 865.3,1635.9 851.0,1649.0 846.2,1645.4 851.0,1631.1 862.9,1612.0 865.3,1590.5 874.9,1578.5 877.3,1569.0 877.3,1491.4 876.1,1471.1 865.3,1463.9 867.7,1454.3"/><polygon fill="#154b24" points="871.3,1437.6 917.9,1437.6 927.4,1447.2 941.8,1448.4 951.3,1457.9 951.3,1484.2 913.1,1486.6 909.5,1490.2 909.5,1500.9 890.4,1500.9 888.0,1480.6 895.2,1473.4 871.3,1451.9"/><polygon fill="#d8e28a" points="867.7,1454.3 871.3,1451.9 895.2,1473.4 888.0,1480.6 888.0,1491.4 877.3,1491.4 876.1,1471.1 865.3,1463.9"/><polygon fill="#d8e28a" points="932.2,1443.6 942.9,1437.6 994.3,1437.6 994.3,1451.9 975.2,1459.1 956.1,1457.9 941.8,1448.4"/><polygon fill="#f4826a" points="953.7,1459.1 975.2,1459.1 988.3,1454.3 988.3,1485.4 977.6,1494.9 952.5,1494.9"/><polygon fill="#d8e28a" points="1049.2,1437.6 1065.0,1437.6 1065.0,1497.3 1055.2,1504.5 1051.6,1475.8 1046.8,1468.7 1051.6,1463.9"/><polygon fill="#154b24" points="960.9,1506.9 988.3,1486.6 1001.5,1497.3 1002.7,1494.9 1009.8,1498.5 1020.6,1509.3 1020.6,1523.6 1013.4,1524.8 1013.4,1537.9 1003.9,1537.9 993.1,1530.8 977.6,1526.0"/><polygon fill="#d8e28a" points="958.5,1537.9 976.4,1528.4 993.1,1532.0 1003.9,1537.9 1013.4,1542.7 1011.0,1547.5 1015.8,1564.2 1015.8,1571.4 997.9,1576.1 994.3,1583.3 970.4,1583.3 960.9,1571.4 964.4,1564.2 958.5,1554.6"/><polygon fill="#c8c9ca" points="1019.4,1570.2 1037.3,1554.6 1065.0,1552.3 1065.0,1602.4 1058.8,1597.6 1042.1,1595.3 1042.1,1580.9 1019.4,1576.1"/><polygon fill="#c8c9ca" points="874.9,1578.5 877.3,1570.2 886.8,1571.4 891.6,1577.3 903.5,1572.6 915.5,1577.3 929.8,1578.5 931.0,1592.9 920.3,1602.4 903.5,1597.6 894.0,1604.8 882.0,1607.2 870.1,1617.9 873.7,1628.7 874.9,1633.5 865.3,1635.9 851.0,1649.0 846.2,1645.4 851.0,1631.1 862.9,1612.0 865.3,1590.5"/><polygon fill="#f4826a" points="916.7,1623.9 925.0,1617.9 929.8,1622.7 941.8,1622.7 941.8,1631.1 917.9,1631.1"/><polygon fill="#d8e28a" points="946.5,1628.7 962.1,1622.7 962.1,1610.8 971.6,1610.8 971.6,1633.5 951.3,1635.9"/><polygon fill="#d8e28a" points="1017.0,1638.2 1024.2,1638.2 1024.2,1627.5 1036.1,1627.5 1039.7,1638.2 1025.3,1650.2 1018.2,1653.8"/></g>
<g clip-path="url(#c7)"><polygon fill="#76a466" points="997.6,1437.6 1151.7,1437.6 1151.7,1450.7 1138.5,1450.7 1131.4,1443.6 1131.4,1455.5 1117.0,1456.7 1111.1,1462.7 1111.1,1478.2 1084.8,1504.5 1071.7,1546.3 1076.4,1552.3 1084.8,1573.8 1086.0,1616.8 1065.7,1617.9 1038.2,1640.6 1016.7,1657.8 997.6,1647.8"/><polygon fill="#d8e28a" points="1050.2,1437.6 1090.8,1437.6 1111.1,1462.7 1111.1,1478.2 1084.8,1504.5 1076.4,1496.1 1062.1,1497.3 1054.9,1504.5 1051.4,1471.1 1047.8,1468.7 1050.2,1463.9"/><polygon fill="#f4826a" points="1090.8,1437.6 1151.7,1437.6 1151.7,1450.7 1138.5,1450.7 1131.4,1443.6 1131.4,1455.5 1117.0,1456.7 1111.1,1461.5"/><polygon fill="#154b24" points="997.6,1504.5 1003.6,1493.7 1009.6,1498.5 1017.9,1502.1 1021.5,1509.3 1021.5,1523.6 1013.1,1524.8 1013.1,1537.9 997.6,1537.9"/><polygon fill="#d8e28a" points="997.6,1537.9 1013.1,1539.1 1009.6,1547.5 1014.3,1557.0 1015.5,1570.2 997.6,1570.2"/><polygon fill="#c8c9ca" points="1019.1,1569.0 1035.8,1555.8 1058.5,1552.3 1071.7,1547.5 1076.4,1552.3 1084.8,1573.8 1086.0,1616.8 1074.0,1616.8 1064.5,1607.2 1064.5,1597.6 1054.9,1595.3 1043.0,1594.1 1041.8,1583.3 1035.8,1578.5 1019.1,1573.8"/><polygon fill="#d8e28a" points="1065.0,1604.8 1072.8,1603.6 1074.0,1616.8 1065.7,1619.1"/><polygon fill="#d8e28a" points="1015.5,1638.2 1023.9,1638.2 1023.9,1627.5 1035.8,1627.5 1035.8,1635.9 1040.6,1640.6 1023.9,1650.2 1016.7,1653.8"/></g>
<g clip-path="url(#c8)"><polygon fill="#76a466" points="887.9,825.9 1180.0,825.9 1180.0,849.1 1170.2,856.3 1154.7,861.1 1154.7,862.2 1170.2,887.3 1170.2,908.8 1173.8,954.2 1176.2,994.8 1166.6,1007.9 1145.1,1011.5 1145.1,1045.0 1164.2,1054.5 1164.2,1099.9 1149.9,1130.0 865.7,1130.0 870.0,1033.7 873.8,1002.7 881.9,969.3 906.0,868.9 906.0,845.0 897.4,835.0"/><polygon fill="#d8e28a" points="894.3,839.6 911.1,837.2 927.8,844.3 938.5,861.1 937.3,865.8 906.3,865.8 905.1,844.3"/><polygon fill="#154b24" points="940.9,827.6 961.2,827.6 967.2,838.4 949.3,856.3 940.9,856.3"/><polygon fill="#d8e28a" points="982.7,834.8 992.3,827.6 1013.8,827.6 1018.5,834.8 1009.0,841.9 992.3,849.1 985.1,844.3"/><polygon fill="#f4826a" points="1011.4,839.6 1018.5,832.4 1023.3,834.8 1016.1,840.7"/><polygon fill="#d8e28a" points="1032.9,839.6 1047.2,837.2 1068.7,837.2 1068.7,868.2 1054.4,861.1 1035.3,844.3"/><polygon fill="#f4826a" points="1066.3,827.6 1080.6,827.6 1095.0,841.9 1095.0,853.9 1080.6,856.3 1078.2,868.2 1071.1,868.2"/><polygon fill="#f4826a" points="1083.0,827.6 1110.5,827.6 1110.5,836.0 1095.0,837.2"/><polygon fill="#d8e28a" points="1110.5,827.6 1180.0,827.6 1180.0,841.9 1171.4,844.3 1147.5,844.3 1147.5,856.3 1133.2,856.3 1128.4,846.7 1110.5,839.6"/><polygon fill="#c8c9ca" points="1147.5,844.3 1180.0,841.9 1180.0,849.1 1170.2,856.3 1147.5,856.3"/><polygon fill="#d8e28a" points="1099.7,841.9 1128.4,841.9 1133.2,856.3 1147.5,858.7 1147.5,865.8 1138.0,887.3 1118.9,887.3 1118.9,863.4 1099.7,863.4"/><polygon fill="#c8c9ca" points="1079.4,856.3 1095.0,855.1 1096.2,880.2 1079.4,880.2"/><polygon fill="#c8c9ca" points="1047.2,889.7 1061.5,869.4 1078.2,869.4 1079.4,880.2 1085.4,887.3 1087.8,896.9 1075.9,906.4 1066.3,899.3 1056.8,896.9"/><polygon fill="#c62a24" points="1098.5,863.4 1120.0,863.4 1120.0,890.9 1111.7,901.7 1098.5,887.3"/><polygon fill="#f4826a" points="1130.8,871.8 1147.5,862.2 1154.7,862.2 1170.2,887.3 1170.2,908.8 1149.9,914.8 1130.8,894.5"/><polygon fill="#154b24" points="1110.5,904.0 1130.8,874.2 1130.8,894.5 1149.9,914.8 1138.0,927.9 1138.0,951.8 1128.4,942.3 1118.9,942.3 1110.5,932.7"/><polygon fill="#d8e28a" points="1138.0,927.9 1149.9,914.8 1170.2,908.8 1173.8,954.2 1161.8,968.5 1138.0,968.5"/><polygon fill="#d8e28a" points="906.0,868.9 937.3,865.8 943.3,863.4 956.4,863.4 963.6,873.0 944.5,873.0 932.5,880.2 937.3,892.1 937.3,911.2 915.8,911.2 908.7,901.7"/><polygon fill="#154b24" points="932.5,880.2 944.5,873.0 963.6,875.4 970.8,868.2 982.7,869.4 977.9,882.5 961.2,896.9 946.9,896.9"/><polygon fill="#d8e28a" points="964.8,851.5 994.6,849.1 999.4,856.3 982.7,869.4 970.8,865.8 963.6,873.0"/><polygon fill="#d8e28a" points="982.7,869.4 994.6,858.7 1013.8,873.0 1032.9,892.1 1044.8,904.0 1037.6,913.6 1023.3,913.6 1009.0,901.7 992.3,884.9"/><polygon fill="#154b24" points="962.4,899.3 980.3,882.5 992.3,887.3 1009.0,901.7 1023.3,913.6 1037.6,913.6 1047.2,894.5 1056.8,908.8 1063.9,920.8 1056.8,925.5 1056.8,949.4 1032.9,951.8 1013.8,966.1 999.4,970.9 989.9,963.8 975.5,966.1 972.0,982.9 972.0,997.2 949.3,997.2 949.3,968.5 956.4,966.1 956.4,949.4 954.0,944.6 954.0,923.2 962.4,920.8"/><polygon fill="#76a466" points="956.4,920.8 989.9,918.4 994.6,925.5 975.5,942.3 970.8,956.6 958.8,949.4"/><polygon fill="#76a466" points="1032.9,930.3 1044.8,925.5 1061.5,925.5 1056.8,937.5 1032.9,937.5"/><polygon fill="#76a466" points="972.0,973.3 989.9,966.1 999.4,970.9 1013.8,966.1 1023.3,973.3 1004.2,992.4 972.0,997.2"/><polygon fill="#d8e28a" points="877.6,939.9 894.3,937.5 908.7,954.2 930.2,963.8 923.0,970.9 903.9,970.9 901.5,961.4 884.8,968.5"/><polygon fill="#154b24" points="877.6,985.3 894.3,982.9 903.9,973.3 911.1,973.3 911.1,985.3 920.6,990.0 920.6,1013.9 908.7,1006.8 877.6,1006.8"/><polygon fill="#d8e28a" points="1020.9,978.1 1037.6,963.8 1061.5,951.8 1071.1,947.0 1083.0,925.5 1109.3,925.5 1109.3,932.7 1099.7,949.4 1083.0,959.0 1083.0,980.5 1061.5,987.6 1052.0,1002.0 1032.9,1021.1 1028.1,1016.3 1032.9,1002.0 1023.3,997.2 1025.7,985.3"/><polygon fill="#d8e28a" points="970.8,1013.9 980.3,997.2 1009.0,997.2 1023.3,975.7 1028.1,985.3 1023.3,997.2 1032.9,1002.0 1032.9,1018.7 1028.1,1028.2 1004.2,1030.6 987.5,1028.2 975.5,1021.1"/><polygon fill="#c8c9ca" points="972.0,1025.9 985.1,1021.1 1001.8,1037.8 992.3,1049.7 989.9,1068.9 980.3,1068.9 972.0,1056.9"/><polygon fill="#f4826a" points="992.3,1049.7 1001.8,1037.8 1016.1,1025.9 1028.1,1035.4 1037.6,1045.0 1032.9,1052.1 1020.9,1059.3 985.1,1071.2 989.9,1056.9"/><polygon fill="#154b24" points="877.6,1040.2 901.5,1040.2 903.9,1031.8 911.1,1035.4 908.7,1042.6 920.6,1059.3 911.1,1068.9 901.5,1059.3 877.6,1059.3"/><polygon fill="#c8c9ca" points="931.4,1052.1 942.1,1049.7 954.0,1059.3 966.0,1049.7 980.3,1066.5 975.5,1083.2 958.8,1088.0 949.3,1076.0 939.7,1068.9"/><polygon fill="#d8e28a" points="946.9,1068.9 958.8,1066.5 961.2,1102.3 949.3,1102.3"/><polygon fill="#d8e28a" points="992.3,1078.4 1009.0,1068.9 1023.3,1059.3 1040.0,1059.3 1040.0,1099.9 1013.8,1099.9 1004.2,1085.6"/><polygon fill="#154b24" points="899.1,1111.8 923.0,1097.5 934.9,1088.0 951.7,1088.0 951.7,1104.7 934.9,1111.8 934.9,1130.0 899.1,1130.0"/><polygon fill="#d8e28a" points="961.2,1116.6 975.5,1111.8 992.3,1116.6 994.6,1130.0 961.2,1130.0"/><polygon fill="#c8c9ca" points="1028.1,1116.6 1047.2,1111.8 1056.8,1099.9 1073.5,1116.6 1073.5,1130.0 1028.1,1130.0"/><polygon fill="#f4826a" points="1092.6,1056.9 1106.9,1047.4 1130.8,1045.0 1152.3,1047.4 1164.2,1054.5 1164.2,1099.9 1149.9,1111.8 1149.9,1130.0 1116.5,1130.0 1123.6,1109.5 1102.1,1083.2 1099.7,1068.9"/><polygon fill="#d8e28a" points="1109.3,1013.9 1128.4,1004.4 1145.1,1011.5 1145.1,1045.0 1130.8,1045.0 1109.3,1045.0"/><polygon fill="#f4826a" points="1089.0,997.2 1103.3,982.9 1103.3,1006.8 1099.7,1016.3 1091.4,1016.3"/></g>
<polygon fill="#76a466" points="338.7,1052.5 342.8,1051.9 342.8,1059.2 339.3,1061.9"/>
<polygon fill="#c8c9ca" points="315.7,1110.7 319.8,1116.9 330.6,1117.4 332.8,1117.4 332.8,1126.9 329.2,1131.0 315.7,1131.0"/>
<polygon fill="#154b24" points="315.7,1108.0 323.8,1100.4 327.9,1103.9 331.9,1104.4 336.5,1112.6 330.6,1117.4 319.8,1116.9"/>
<polygon fill="#f4826a" points="463.2,1101.2 470.0,1097.9 475.4,1099.8 481.3,1107.1 481.3,1113.4 474.0,1113.4"/>
<polygon fill="#d8e28a" points="568.8,1167.5 576.9,1161.3 612.1,1161.3 616.1,1166.1 616.1,1178.3 618.8,1179.7 614.8,1186.4 579.6,1187.8 568.8,1177.0"/>
<polygon fill="#d8e28a" points="425.3,1168.3 430.7,1168.8 467.3,1189.1 465.9,1193.2 449.7,1187.3 437.5,1179.7"/>
<polygon fill="#f4826a" points="465.9,1189.1 510.6,1209.4 507.9,1212.7 502.4,1212.7 467.3,1197.3 467.3,1193.2"/>
<polygon fill="#d8e28a" points="341.4,1197.3 353.6,1197.3 359.0,1191.0 364.4,1191.9 372.5,1200.8 371.2,1210.8 367.1,1213.5 350.9,1213.5 348.2,1206.7"/>
<polygon fill="#d8e28a" points="386.1,1214.9 391.5,1209.4 403.7,1209.4 411.8,1225.7 413.1,1232.4 398.3,1232.4 387.4,1223.0"/>
<polygon fill="#f4826a" points="402.3,1209.4 409.1,1209.4 425.3,1220.3 452.4,1233.8 464.6,1236.5 463.2,1237.9 436.1,1237.9 433.4,1240.6 414.5,1236.5 411.8,1227.0"/>
<polygon fill="#76a466" points="519.5,1255.5 526.8,1248.7 532.2,1248.7 555.2,1267.6 560.6,1282.5 549.8,1284.7 543.0,1283.9 520.0,1262.2"/>
<polygon fill="#f4826a" points="555.2,1267.6 576.9,1269.0 582.3,1263.6 614.8,1258.2 639.1,1257.6 645.9,1263.6 645.9,1273.0 641.8,1275.8 633.7,1271.7 622.9,1267.6 608.0,1273.0 585.0,1274.4 585.0,1287.9 574.2,1287.9 560.6,1281.2"/>
<polygon fill="#76a466" points="585.0,1275.8 593.1,1273.0 609.4,1281.2 609.4,1287.9 585.0,1287.9"/>
<polygon fill="#d8e28a" points="603.9,1275.8 622.9,1267.6 641.8,1275.8 633.7,1282.5 620.2,1283.9 609.4,1286.6"/>
<polygon fill="#d8e28a" points="633.7,1319.1 641.8,1316.3 654.0,1316.3 662.1,1325.8 660.8,1332.6 655.4,1332.6 647.2,1327.2 633.7,1328.5"/>
<polyline fill="none" stroke="#d0d0d0" stroke-width="1.5" points="410.4,1040.3 410.4,1141.2 304.9,1141.2"/>
<polyline fill="none" stroke="#d0d0d0" stroke-width="1.5" points="681.1,1041.7 681.1,1344.8 304.9,1344.8"/>
<polyline fill="none" stroke="#d0d0d0" stroke-width="1.5" points="504.6,1343.4 504.6,1239.2 679.7,1239.2"/>
<polygon fill="#d8e28a" points="358.1,1457.6 375.7,1439.5 383.5,1439.5 402.1,1458.1 412.5,1458.7 411.4,1468.0 406.8,1472.1 416.6,1483.0 412.5,1488.7 411.4,1498.0 407.3,1501.6 386.6,1495.9 362.3,1471.1 361.7,1460.7"/>
<polygon fill="#f4826a" points="412.5,1458.7 431.1,1458.7 436.8,1453.0 447.7,1453.0 448.7,1468.0 446.6,1473.1 454.9,1483.0 445.6,1490.7 444.0,1515.1 407.3,1501.6 411.4,1498.0 412.5,1488.7 416.6,1483.0 406.8,1472.1 411.4,1468.0"/>
<polygon fill="#76a466" points="447.7,1453.0 460.6,1453.0 484.9,1478.3 497.3,1478.3 519.6,1485.6 509.8,1485.6 496.8,1499.0 489.1,1489.7 468.4,1489.7 465.8,1493.9 470.4,1500.1 471.0,1509.4 474.6,1515.6 453.9,1516.1 450.8,1518.7 444.0,1515.6 445.6,1490.7 454.9,1483.0 446.6,1473.1 448.7,1468.0"/>
<polygon fill="#d8e28a" points="465.8,1493.9 468.4,1489.7 489.1,1489.7 496.8,1499.0 492.7,1503.2 492.2,1508.3 481.8,1516.6 474.6,1515.6 471.0,1509.4 470.4,1500.1"/>
<polygon fill="#d8e28a" points="496.3,1453.5 502.0,1446.7 506.1,1439.5 518.1,1439.5 518.1,1446.2 509.8,1446.2 504.6,1451.4 498.4,1456.1"/>
<polyline fill="none" stroke="#fff" stroke-width="3" stroke-linejoin="miter" points="881.9,745.7 918.7,745.7 918.7,725.8 931.7,722.8 957.5,720.8 971.5,708.9 988.4,708.9 988.4,732.1 994.8,732.9 994.8,752.1 1021.4,753.2 1026.2,757.0 1003.3,780.5 1002.3,799.4"/>
<polyline fill="none" stroke="#fff" stroke-width="3" stroke-linejoin="miter" points="881.9,778.5 891.8,778.5 903.8,784.5 909.8,788.5 904.8,799.4 953.6,799.4 963.5,793.1 971.5,793.1 987.4,805.4 1002.3,799.4"/>
<polyline fill="none" stroke="#fff" stroke-width="3" stroke-linejoin="miter" points="1002.3,799.4 1016.2,815.4 1018.2,832.3 1011.3,839.2 999.3,849.2 964.5,850.2 962.5,860.1 943.6,860.1 940.6,865.1 930.7,860.1 905.8,867.1 899.8,867.1"/>
<polyline fill="none" stroke="#fff" stroke-width="3" stroke-linejoin="miter" points="1018.2,835.3 1065.0,835.3 1065.0,827.3 1079.9,827.3 1094.9,839.2"/>
<polyline fill="none" stroke="#fff" stroke-width="3" stroke-linejoin="miter" points="1108.8,731.8 1108.8,767.6 1091.9,783.5 1090.9,799.4 1080.9,826.3"/>
<polyline fill="none" stroke="#fff" stroke-width="3" stroke-linejoin="miter" points="1057.1,930.0 1059.0,904.9 1067.0,895.0 1075.0,900.9 1086.9,887.0 1098.9,881.0"/>
<polyline fill="none" stroke="#fff" stroke-width="3" stroke-linejoin="miter" points="848.6,1167.6 848.6,1201.1 862.9,1213.0 871.3,1221.4 864.1,1227.3 877.3,1246.4 865.3,1254.8 865.3,1267.9 852.2,1289.4 853.4,1303.8 867.7,1309.7 884.4,1308.5 889.2,1299.0 903.5,1297.8 904.7,1290.6 920.3,1303.8 929.8,1293.0 956.1,1288.2 975.2,1306.1"/>
<polyline fill="none" stroke="#fff" stroke-width="3" stroke-linejoin="miter" points="945.3,1240.5 975.2,1210.6 989.5,1203.4 1006.2,1184.3 1001.5,1167.6"/>
<polyline fill="none" stroke="#fff" stroke-width="3" stroke-linejoin="miter" points="945.3,1240.5 962.1,1264.3 962.1,1284.6 975.2,1303.8"/>
<polyline fill="none" stroke="#fff" stroke-width="3" stroke-linejoin="miter" points="962.1,1264.3 981.2,1258.4 994.3,1262.0 1003.9,1265.5 1020.6,1278.7 1034.9,1275.1 1054.0,1265.5 1065.0,1262.0"/>
<polyline fill="none" stroke="#fff" stroke-width="3" stroke-linejoin="miter" points="896.4,1327.6 898.8,1347.9 934.6,1349.1 953.7,1368.2 953.7,1386.2 975.2,1388.5 975.2,1411.2 963.2,1418.4 929.8,1447.1 941.8,1447.1 953.7,1460.2 953.7,1470.0"/>
<polyline fill="none" stroke="#fff" stroke-width="3" stroke-linejoin="miter" points="975.2,1393.3 1011.0,1393.3 1025.3,1406.5 1049.2,1418.4 1065.0,1418.4"/>
<polyline fill="none" stroke="#fff" stroke-width="3" stroke-linejoin="miter" points="796.1,1201.1 810.4,1199.9 816.4,1213.0 834.3,1202.2 847.4,1205.8"/>
<polyline fill="none" stroke="#fff" stroke-width="3" stroke-linejoin="miter" points="997.6,1265.5 1009.6,1266.7 1016.7,1277.5 1028.7,1277.5 1038.2,1271.5 1057.3,1266.7 1070.5,1259.6 1081.2,1270.3 1086.0,1279.9 1089.6,1296.6 1095.5,1295.4 1117.0,1295.4 1120.6,1300.2"/>
<polyline fill="none" stroke="#fff" stroke-width="3" stroke-linejoin="miter" points="997.6,1394.5 1010.7,1395.7 1023.9,1406.5 1045.4,1407.7 1050.2,1418.4 1072.8,1419.6 1101.5,1393.3 1131.4,1422.0 1148.1,1423.2"/>
<polyline fill="none" stroke="#fff" stroke-width="3" stroke-linejoin="miter" points="877.3,1491.4 890.4,1503.3 909.5,1502.1 911.9,1487.8 951.3,1485.4 951.3,1457.9 941.8,1447.2 929.8,1447.2"/>
<polyline fill="none" stroke="#fff" stroke-width="3" stroke-linejoin="miter" points="877.3,1569.0 886.8,1572.6 895.2,1576.1 903.5,1571.4 915.5,1577.3 929.8,1576.1 946.5,1570.2 968.0,1585.7 994.3,1585.7 1003.9,1576.1 1018.2,1570.2 1037.3,1555.8 1065.0,1552.3"/>
<polyline fill="none" stroke="#fff" stroke-width="3" stroke-linejoin="miter" points="997.6,1570.2 1016.7,1569.0 1035.8,1554.6 1057.3,1552.3 1071.7,1547.5"/>
<polyline fill="none" stroke="#fff" stroke-width="3" stroke-linejoin="miter" points="882.0,969.3 901.1,978.8 908.3,972.8 910.7,984.8 921.4,988.4 921.4,1006.3 932.2,1006.3 948.9,994.3 972.8,997.9"/>
<polyline fill="none" stroke="#fff" stroke-width="3" stroke-linejoin="miter" points="865.3,1056.4 898.8,1057.6 903.5,1067.2 910.7,1073.2 922.6,1062.4 932.2,1064.8 937.0,1077.9 948.9,1069.6 956.1,1081.5 963.2,1067.2 972.8,1048.1"/>
</svg>

<!-- TABLE -->
<div id="tbl"></div>
<div id="th"></div>
<div class="hd" style="left:1405px;top:396px">Ranking dos<br>Exames</div>
<div class="hd" style="left:1690px;top:417px">Nome</div>
<div class="hd" style="left:2527px;top:417px">Concelho</div>
<div class="hd" style="left:2895px;top:396px">Média dos<br>Exames</div>
<div class="hd" style="left:3180px;top:396px">Ranking de<br><span style="display:inline-block;transform:scaleX(0.93);transform-origin:0 50%">Superação</span></div>
<svg class="a" style="left:1370px;top:410px" width="2100" height="80" viewBox="1370 410 2100 80">
 <path d="M1629 440 L1640.5 422 L1652 440Z" fill="#555"/>
 <g fill="#dcdcde">
  <path d="M2466 440 L2477 423 L2488 440Z M2466 442 L2477 459 L2488 442Z"/>
  <path d="M2833 440 L2844 423 L2855 440Z M2833 442 L2844 459 L2855 442Z"/>
  <path d="M3118 440 L3129 423 L3140 440Z M3118 442 L3129 459 L3140 442Z"/>
  <path d="M3430 440 L3441 423 L3452 440Z M3430 442 L3441 459 L3452 442Z"/>
 </g>
 <circle cx="3363" cy="460" r="14.5" fill="none" stroke="#111" stroke-width="2.6"/>
 <text x="3363" y="469" font-size="22" font-weight="bold" text-anchor="middle" fill="#111" font-family="Liberation Sans">?</text>
</svg>
<div class="row" style="top:508.0px"><div class="c1">41.º</div><svg class="ic" width="33" height="36" viewBox="0 0 33 36"><path fill="#2ea3d8" d="M0.5 8 Q0.5 3 8 1.5 Q16.5 -0.5 25 1.5 Q32.5 3 32.5 8 V35 H20.5 V31 H12.5 V35 H0.5Z"/><g fill="#fff"><circle cx="16.5" cy="3" r="1.3"/><rect x="2.4" y="8.4" width="4.2" height="2.2"/><rect x="10.2" y="8.4" width="4.2" height="2.2"/><rect x="17.9" y="8.4" width="4.2" height="2.2"/><rect x="25.6" y="8.4" width="4.2" height="2.2"/><rect x="2.4" y="14.4" width="4.2" height="2.2"/><rect x="10.2" y="14.4" width="4.2" height="2.2"/><rect x="17.9" y="14.4" width="4.2" height="2.2"/><rect x="25.6" y="14.4" width="4.2" height="2.2"/><rect x="2.4" y="20.4" width="4.2" height="2.2"/><rect x="10.2" y="20.4" width="4.2" height="2.2"/><rect x="17.9" y="20.4" width="4.2" height="2.2"/><rect x="25.6" y="20.4" width="4.2" height="2.2"/><rect x="2.4" y="26.9" width="4.2" height="2.2"/><rect x="10.2" y="26.9" width="4.2" height="2.2"/><rect x="17.9" y="26.9" width="4.2" height="2.2"/><rect x="25.6" y="26.9" width="4.2" height="2.2"/></g></svg><div class="c2">Escola Secundária Eça de Queirós</div><div class="c3">Póvoa de Varzim</div><div class="c4">15,24</div><div class="c5">4.º</div></div>
<div class="row" style="top:602.0px"><div class="c1">42.º</div><svg class="ic" width="33" height="36" viewBox="0 0 33 36"><path fill="#2ea3d8" d="M0.5 8 Q0.5 3 8 1.5 Q16.5 -0.5 25 1.5 Q32.5 3 32.5 8 V35 H20.5 V31 H12.5 V35 H0.5Z"/><g fill="#fff"><circle cx="16.5" cy="3" r="1.3"/><rect x="2.4" y="8.4" width="4.2" height="2.2"/><rect x="10.2" y="8.4" width="4.2" height="2.2"/><rect x="17.9" y="8.4" width="4.2" height="2.2"/><rect x="25.6" y="8.4" width="4.2" height="2.2"/><rect x="2.4" y="14.4" width="4.2" height="2.2"/><rect x="10.2" y="14.4" width="4.2" height="2.2"/><rect x="17.9" y="14.4" width="4.2" height="2.2"/><rect x="25.6" y="14.4" width="4.2" height="2.2"/><rect x="2.4" y="20.4" width="4.2" height="2.2"/><rect x="10.2" y="20.4" width="4.2" height="2.2"/><rect x="17.9" y="20.4" width="4.2" height="2.2"/><rect x="25.6" y="20.4" width="4.2" height="2.2"/><rect x="2.4" y="26.9" width="4.2" height="2.2"/><rect x="10.2" y="26.9" width="4.2" height="2.2"/><rect x="17.9" y="26.9" width="4.2" height="2.2"/><rect x="25.6" y="26.9" width="4.2" height="2.2"/></g></svg><div class="c2">Escola Secundária Infanta D. Maria</div><div class="c3">Coimbra</div><div class="c4">15,20</div><div class="c5">7.º</div></div>
<div class="row" style="top:696.0px"><div class="c1">49.º</div><svg class="ic" width="33" height="36" viewBox="0 0 33 36"><path fill="#2ea3d8" d="M0.5 8 Q0.5 3 8 1.5 Q16.5 -0.5 25 1.5 Q32.5 3 32.5 8 V35 H20.5 V31 H12.5 V35 H0.5Z"/><g fill="#fff"><circle cx="16.5" cy="3" r="1.3"/><rect x="2.4" y="8.4" width="4.2" height="2.2"/><rect x="10.2" y="8.4" width="4.2" height="2.2"/><rect x="17.9" y="8.4" width="4.2" height="2.2"/><rect x="25.6" y="8.4" width="4.2" height="2.2"/><rect x="2.4" y="14.4" width="4.2" height="2.2"/><rect x="10.2" y="14.4" width="4.2" height="2.2"/><rect x="17.9" y="14.4" width="4.2" height="2.2"/><rect x="25.6" y="14.4" width="4.2" height="2.2"/><rect x="2.4" y="20.4" width="4.2" height="2.2"/><rect x="10.2" y="20.4" width="4.2" height="2.2"/><rect x="17.9" y="20.4" width="4.2" height="2.2"/><rect x="25.6" y="20.4" width="4.2" height="2.2"/><rect x="2.4" y="26.9" width="4.2" height="2.2"/><rect x="10.2" y="26.9" width="4.2" height="2.2"/><rect x="17.9" y="26.9" width="4.2" height="2.2"/><rect x="25.6" y="26.9" width="4.2" height="2.2"/></g></svg><div class="c2">Escola Básica e Secundária de Arga e Lima</div><div class="c3">Viana do Castelo</div><div class="c4">14,95</div><div class="c5">2.º</div></div>
<div class="row" style="top:790.0px"><div class="c1">51.º</div><svg class="ic" width="33" height="36" viewBox="0 0 33 36"><path fill="#2ea3d8" d="M0.5 8 Q0.5 3 8 1.5 Q16.5 -0.5 25 1.5 Q32.5 3 32.5 8 V35 H20.5 V31 H12.5 V35 H0.5Z"/><g fill="#fff"><circle cx="16.5" cy="3" r="1.3"/><rect x="2.4" y="8.4" width="4.2" height="2.2"/><rect x="10.2" y="8.4" width="4.2" height="2.2"/><rect x="17.9" y="8.4" width="4.2" height="2.2"/><rect x="25.6" y="8.4" width="4.2" height="2.2"/><rect x="2.4" y="14.4" width="4.2" height="2.2"/><rect x="10.2" y="14.4" width="4.2" height="2.2"/><rect x="17.9" y="14.4" width="4.2" height="2.2"/><rect x="25.6" y="14.4" width="4.2" height="2.2"/><rect x="2.4" y="20.4" width="4.2" height="2.2"/><rect x="10.2" y="20.4" width="4.2" height="2.2"/><rect x="17.9" y="20.4" width="4.2" height="2.2"/><rect x="25.6" y="20.4" width="4.2" height="2.2"/><rect x="2.4" y="26.9" width="4.2" height="2.2"/><rect x="10.2" y="26.9" width="4.2" height="2.2"/><rect x="17.9" y="26.9" width="4.2" height="2.2"/><rect x="25.6" y="26.9" width="4.2" height="2.2"/></g></svg><div class="c2">Escola Secundária de Paredes</div><div class="c3">Paredes</div><div class="c4">14,87</div><div class="c5">3.º</div></div>
<div class="row" style="top:884.0px"><div class="c1">52.º</div><svg class="ic" width="33" height="36" viewBox="0 0 33 36"><path fill="#2ea3d8" d="M0.5 8 Q0.5 3 8 1.5 Q16.5 -0.5 25 1.5 Q32.5 3 32.5 8 V35 H20.5 V31 H12.5 V35 H0.5Z"/><g fill="#fff"><circle cx="16.5" cy="3" r="1.3"/><rect x="2.4" y="8.4" width="4.2" height="2.2"/><rect x="10.2" y="8.4" width="4.2" height="2.2"/><rect x="17.9" y="8.4" width="4.2" height="2.2"/><rect x="25.6" y="8.4" width="4.2" height="2.2"/><rect x="2.4" y="14.4" width="4.2" height="2.2"/><rect x="10.2" y="14.4" width="4.2" height="2.2"/><rect x="17.9" y="14.4" width="4.2" height="2.2"/><rect x="25.6" y="14.4" width="4.2" height="2.2"/><rect x="2.4" y="20.4" width="4.2" height="2.2"/><rect x="10.2" y="20.4" width="4.2" height="2.2"/><rect x="17.9" y="20.4" width="4.2" height="2.2"/><rect x="25.6" y="20.4" width="4.2" height="2.2"/><rect x="2.4" y="26.9" width="4.2" height="2.2"/><rect x="10.2" y="26.9" width="4.2" height="2.2"/><rect x="17.9" y="26.9" width="4.2" height="2.2"/><rect x="25.6" y="26.9" width="4.2" height="2.2"/></g></svg><div class="c2">Escola Básica e Secundária Dr. Machado de Matos</div><div class="c3">Felgueiras</div><div class="c4">14,85</div><div class="c5">1.º</div></div>
<div class="row" style="top:978.0px"><div class="c1">53.º</div><svg class="ic" width="33" height="36" viewBox="0 0 33 36"><path fill="#2ea3d8" d="M0.5 8 Q0.5 3 8 1.5 Q16.5 -0.5 25 1.5 Q32.5 3 32.5 8 V35 H20.5 V31 H12.5 V35 H0.5Z"/><g fill="#fff"><circle cx="16.5" cy="3" r="1.3"/><rect x="2.4" y="8.4" width="4.2" height="2.2"/><rect x="10.2" y="8.4" width="4.2" height="2.2"/><rect x="17.9" y="8.4" width="4.2" height="2.2"/><rect x="25.6" y="8.4" width="4.2" height="2.2"/><rect x="2.4" y="14.4" width="4.2" height="2.2"/><rect x="10.2" y="14.4" width="4.2" height="2.2"/><rect x="17.9" y="14.4" width="4.2" height="2.2"/><rect x="25.6" y="14.4" width="4.2" height="2.2"/><rect x="2.4" y="20.4" width="4.2" height="2.2"/><rect x="10.2" y="20.4" width="4.2" height="2.2"/><rect x="17.9" y="20.4" width="4.2" height="2.2"/><rect x="25.6" y="20.4" width="4.2" height="2.2"/><rect x="2.4" y="26.9" width="4.2" height="2.2"/><rect x="10.2" y="26.9" width="4.2" height="2.2"/><rect x="17.9" y="26.9" width="4.2" height="2.2"/><rect x="25.6" y="26.9" width="4.2" height="2.2"/></g></svg><div class="c2">Escola Secundária Quinta das Palmeiras</div><div class="c3">Covilhã</div><div class="c4">14,85</div><div class="c5">25.º</div></div>
<div class="row" style="top:1072.0px"><div class="c1">54.º</div><svg class="ic" width="33" height="36" viewBox="0 0 33 36"><path fill="#2ea3d8" d="M0.5 8 Q0.5 3 8 1.5 Q16.5 -0.5 25 1.5 Q32.5 3 32.5 8 V35 H20.5 V31 H12.5 V35 H0.5Z"/><g fill="#fff"><circle cx="16.5" cy="3" r="1.3"/><rect x="2.4" y="8.4" width="4.2" height="2.2"/><rect x="10.2" y="8.4" width="4.2" height="2.2"/><rect x="17.9" y="8.4" width="4.2" height="2.2"/><rect x="25.6" y="8.4" width="4.2" height="2.2"/><rect x="2.4" y="14.4" width="4.2" height="2.2"/><rect x="10.2" y="14.4" width="4.2" height="2.2"/><rect x="17.9" y="14.4" width="4.2" height="2.2"/><rect x="25.6" y="14.4" width="4.2" height="2.2"/><rect x="2.4" y="20.4" width="4.2" height="2.2"/><rect x="10.2" y="20.4" width="4.2" height="2.2"/><rect x="17.9" y="20.4" width="4.2" height="2.2"/><rect x="25.6" y="20.4" width="4.2" height="2.2"/><rect x="2.4" y="26.9" width="4.2" height="2.2"/><rect x="10.2" y="26.9" width="4.2" height="2.2"/><rect x="17.9" y="26.9" width="4.2" height="2.2"/><rect x="25.6" y="26.9" width="4.2" height="2.2"/></g></svg><div class="c2">Escola Básica e Secundária Miguel Torga</div><div class="c3">Bragança</div><div class="c4">14,84</div><div class="c5">17.º</div></div>
<div class="row" style="top:1166.0px"><div class="c1">57.º</div><svg class="ic" width="33" height="36" viewBox="0 0 33 36"><path fill="#2ea3d8" d="M0.5 8 Q0.5 3 8 1.5 Q16.5 -0.5 25 1.5 Q32.5 3 32.5 8 V35 H20.5 V31 H12.5 V35 H0.5Z"/><g fill="#fff"><circle cx="16.5" cy="3" r="1.3"/><rect x="2.4" y="8.4" width="4.2" height="2.2"/><rect x="10.2" y="8.4" width="4.2" height="2.2"/><rect x="17.9" y="8.4" width="4.2" height="2.2"/><rect x="25.6" y="8.4" width="4.2" height="2.2"/><rect x="2.4" y="14.4" width="4.2" height="2.2"/><rect x="10.2" y="14.4" width="4.2" height="2.2"/><rect x="17.9" y="14.4" width="4.2" height="2.2"/><rect x="25.6" y="14.4" width="4.2" height="2.2"/><rect x="2.4" y="20.4" width="4.2" height="2.2"/><rect x="10.2" y="20.4" width="4.2" height="2.2"/><rect x="17.9" y="20.4" width="4.2" height="2.2"/><rect x="25.6" y="20.4" width="4.2" height="2.2"/><rect x="2.4" y="26.9" width="4.2" height="2.2"/><rect x="10.2" y="26.9" width="4.2" height="2.2"/><rect x="17.9" y="26.9" width="4.2" height="2.2"/><rect x="25.6" y="26.9" width="4.2" height="2.2"/></g></svg><div class="c2">Escola Secundária Manuel da Fonseca</div><div class="c3">Santiago do Cacém</div><div class="c4">14,77</div><div class="c5">30.º</div></div>
<div class="row" style="top:1260.0px"><div class="c1">58.º</div><svg class="ic" width="33" height="36" viewBox="0 0 33 36"><path fill="#2ea3d8" d="M0.5 8 Q0.5 3 8 1.5 Q16.5 -0.5 25 1.5 Q32.5 3 32.5 8 V35 H20.5 V31 H12.5 V35 H0.5Z"/><g fill="#fff"><circle cx="16.5" cy="3" r="1.3"/><rect x="2.4" y="8.4" width="4.2" height="2.2"/><rect x="10.2" y="8.4" width="4.2" height="2.2"/><rect x="17.9" y="8.4" width="4.2" height="2.2"/><rect x="25.6" y="8.4" width="4.2" height="2.2"/><rect x="2.4" y="14.4" width="4.2" height="2.2"/><rect x="10.2" y="14.4" width="4.2" height="2.2"/><rect x="17.9" y="14.4" width="4.2" height="2.2"/><rect x="25.6" y="14.4" width="4.2" height="2.2"/><rect x="2.4" y="20.4" width="4.2" height="2.2"/><rect x="10.2" y="20.4" width="4.2" height="2.2"/><rect x="17.9" y="20.4" width="4.2" height="2.2"/><rect x="25.6" y="20.4" width="4.2" height="2.2"/><rect x="2.4" y="26.9" width="4.2" height="2.2"/><rect x="10.2" y="26.9" width="4.2" height="2.2"/><rect x="17.9" y="26.9" width="4.2" height="2.2"/><rect x="25.6" y="26.9" width="4.2" height="2.2"/></g></svg><div class="c2">Escola Secundária do Restelo</div><div class="c3">Lisboa</div><div class="c4">14,71</div><div class="c5">28.º</div></div>
<div class="row" style="top:1354.0px"><div class="c1">59.º</div><svg class="ic" width="33" height="36" viewBox="0 0 33 36"><path fill="#2ea3d8" d="M0.5 8 Q0.5 3 8 1.5 Q16.5 -0.5 25 1.5 Q32.5 3 32.5 8 V35 H20.5 V31 H12.5 V35 H0.5Z"/><g fill="#fff"><circle cx="16.5" cy="3" r="1.3"/><rect x="2.4" y="8.4" width="4.2" height="2.2"/><rect x="10.2" y="8.4" width="4.2" height="2.2"/><rect x="17.9" y="8.4" width="4.2" height="2.2"/><rect x="25.6" y="8.4" width="4.2" height="2.2"/><rect x="2.4" y="14.4" width="4.2" height="2.2"/><rect x="10.2" y="14.4" width="4.2" height="2.2"/><rect x="17.9" y="14.4" width="4.2" height="2.2"/><rect x="25.6" y="14.4" width="4.2" height="2.2"/><rect x="2.4" y="20.4" width="4.2" height="2.2"/><rect x="10.2" y="20.4" width="4.2" height="2.2"/><rect x="17.9" y="20.4" width="4.2" height="2.2"/><rect x="25.6" y="20.4" width="4.2" height="2.2"/><rect x="2.4" y="26.9" width="4.2" height="2.2"/><rect x="10.2" y="26.9" width="4.2" height="2.2"/><rect x="17.9" y="26.9" width="4.2" height="2.2"/><rect x="25.6" y="26.9" width="4.2" height="2.2"/></g></svg><div class="c2">Escola Secundária Domingos Sequeira</div><div class="c3">Leiria</div><div class="c4">14,67</div><div class="c5">40.º</div></div>
<div class="row" style="top:1448.0px"><div class="c1">61.º</div><svg class="ic" width="33" height="36" viewBox="0 0 33 36"><path fill="#2ea3d8" d="M0.5 8 Q0.5 3 8 1.5 Q16.5 -0.5 25 1.5 Q32.5 3 32.5 8 V35 H20.5 V31 H12.5 V35 H0.5Z"/><g fill="#fff"><circle cx="16.5" cy="3" r="1.3"/><rect x="2.4" y="8.4" width="4.2" height="2.2"/><rect x="10.2" y="8.4" width="4.2" height="2.2"/><rect x="17.9" y="8.4" width="4.2" height="2.2"/><rect x="25.6" y="8.4" width="4.2" height="2.2"/><rect x="2.4" y="14.4" width="4.2" height="2.2"/><rect x="10.2" y="14.4" width="4.2" height="2.2"/><rect x="17.9" y="14.4" width="4.2" height="2.2"/><rect x="25.6" y="14.4" width="4.2" height="2.2"/><rect x="2.4" y="20.4" width="4.2" height="2.2"/><rect x="10.2" y="20.4" width="4.2" height="2.2"/><rect x="17.9" y="20.4" width="4.2" height="2.2"/><rect x="25.6" y="20.4" width="4.2" height="2.2"/><rect x="2.4" y="26.9" width="4.2" height="2.2"/><rect x="10.2" y="26.9" width="4.2" height="2.2"/><rect x="17.9" y="26.9" width="4.2" height="2.2"/><rect x="25.6" y="26.9" width="4.2" height="2.2"/></g></svg><div class="c2">Escola Secundária com 3º Ciclo Pedro Nunes</div><div class="c3">Lisboa</div><div class="c4">14,65</div><div class="c5">26.º</div></div>
<div class="row" style="top:1542.0px"><div class="c1">62.º</div><svg class="ic" width="33" height="36" viewBox="0 0 33 36"><path fill="#2ea3d8" d="M0.5 8 Q0.5 3 8 1.5 Q16.5 -0.5 25 1.5 Q32.5 3 32.5 8 V35 H20.5 V31 H12.5 V35 H0.5Z"/><g fill="#fff"><circle cx="16.5" cy="3" r="1.3"/><rect x="2.4" y="8.4" width="4.2" height="2.2"/><rect x="10.2" y="8.4" width="4.2" height="2.2"/><rect x="17.9" y="8.4" width="4.2" height="2.2"/><rect x="25.6" y="8.4" width="4.2" height="2.2"/><rect x="2.4" y="14.4" width="4.2" height="2.2"/><rect x="10.2" y="14.4" width="4.2" height="2.2"/><rect x="17.9" y="14.4" width="4.2" height="2.2"/><rect x="25.6" y="14.4" width="4.2" height="2.2"/><rect x="2.4" y="20.4" width="4.2" height="2.2"/><rect x="10.2" y="20.4" width="4.2" height="2.2"/><rect x="17.9" y="20.4" width="4.2" height="2.2"/><rect x="25.6" y="20.4" width="4.2" height="2.2"/><rect x="2.4" y="26.9" width="4.2" height="2.2"/><rect x="10.2" y="26.9" width="4.2" height="2.2"/><rect x="17.9" y="26.9" width="4.2" height="2.2"/><rect x="25.6" y="26.9" width="4.2" height="2.2"/></g></svg><div class="c2">Escola Secundária Alves Martins</div><div class="c3">Viseu</div><div class="c4">14,64</div><div class="c5">38.º</div></div>
<div class="row" style="top:1636.0px"><div class="c1">63.º</div><svg class="ic" width="33" height="36" viewBox="0 0 33 36"><path fill="#2ea3d8" d="M0.5 8 Q0.5 3 8 1.5 Q16.5 -0.5 25 1.5 Q32.5 3 32.5 8 V35 H20.5 V31 H12.5 V35 H0.5Z"/><g fill="#fff"><circle cx="16.5" cy="3" r="1.3"/><rect x="2.4" y="8.4" width="4.2" height="2.2"/><rect x="10.2" y="8.4" width="4.2" height="2.2"/><rect x="17.9" y="8.4" width="4.2" height="2.2"/><rect x="25.6" y="8.4" width="4.2" height="2.2"/><rect x="2.4" y="14.4" width="4.2" height="2.2"/><rect x="10.2" y="14.4" width="4.2" height="2.2"/><rect x="17.9" y="14.4" width="4.2" height="2.2"/><rect x="25.6" y="14.4" width="4.2" height="2.2"/><rect x="2.4" y="20.4" width="4.2" height="2.2"/><rect x="10.2" y="20.4" width="4.2" height="2.2"/><rect x="17.9" y="20.4" width="4.2" height="2.2"/><rect x="25.6" y="20.4" width="4.2" height="2.2"/><rect x="2.4" y="26.9" width="4.2" height="2.2"/><rect x="10.2" y="26.9" width="4.2" height="2.2"/><rect x="17.9" y="26.9" width="4.2" height="2.2"/><rect x="25.6" y="26.9" width="4.2" height="2.2"/></g></svg><div class="c2">Escola Básica e Secundária D. Filipa de Lencastre</div><div class="c3">Lisboa</div><div class="c4">14,63</div><div class="c5">32.º</div></div>
<div class="row" style="top:1730.0px"><div class="c1">64.º</div><svg class="ic" width="33" height="36" viewBox="0 0 33 36"><path fill="#2ea3d8" d="M0.5 8 Q0.5 3 8 1.5 Q16.5 -0.5 25 1.5 Q32.5 3 32.5 8 V35 H20.5 V31 H12.5 V35 H0.5Z"/><g fill="#fff"><circle cx="16.5" cy="3" r="1.3"/><rect x="2.4" y="8.4" width="4.2" height="2.2"/><rect x="10.2" y="8.4" width="4.2" height="2.2"/><rect x="17.9" y="8.4" width="4.2" height="2.2"/><rect x="25.6" y="8.4" width="4.2" height="2.2"/><rect x="2.4" y="14.4" width="4.2" height="2.2"/><rect x="10.2" y="14.4" width="4.2" height="2.2"/><rect x="17.9" y="14.4" width="4.2" height="2.2"/><rect x="25.6" y="14.4" width="4.2" height="2.2"/><rect x="2.4" y="20.4" width="4.2" height="2.2"/><rect x="10.2" y="20.4" width="4.2" height="2.2"/><rect x="17.9" y="20.4" width="4.2" height="2.2"/><rect x="25.6" y="20.4" width="4.2" height="2.2"/><rect x="2.4" y="26.9" width="4.2" height="2.2"/><rect x="10.2" y="26.9" width="4.2" height="2.2"/><rect x="17.9" y="26.9" width="4.2" height="2.2"/><rect x="25.6" y="26.9" width="4.2" height="2.2"/></g></svg><div class="c2">Escola Secundária José Falcão</div><div class="c3">Coimbra</div><div class="c4">14,62</div><div class="c5">41.º</div></div>
<div class="row" style="top:1824.0px"><div class="c1">65.º</div><svg class="ic" width="33" height="36" viewBox="0 0 33 36"><path fill="#2ea3d8" d="M0.5 8 Q0.5 3 8 1.5 Q16.5 -0.5 25 1.5 Q32.5 3 32.5 8 V35 H20.5 V31 H12.5 V35 H0.5Z"/><g fill="#fff"><circle cx="16.5" cy="3" r="1.3"/><rect x="2.4" y="8.4" width="4.2" height="2.2"/><rect x="10.2" y="8.4" width="4.2" height="2.2"/><rect x="17.9" y="8.4" width="4.2" height="2.2"/><rect x="25.6" y="8.4" width="4.2" height="2.2"/><rect x="2.4" y="14.4" width="4.2" height="2.2"/><rect x="10.2" y="14.4" width="4.2" height="2.2"/><rect x="17.9" y="14.4" width="4.2" height="2.2"/><rect x="25.6" y="14.4" width="4.2" height="2.2"/><rect x="2.4" y="20.4" width="4.2" height="2.2"/><rect x="10.2" y="20.4" width="4.2" height="2.2"/><rect x="17.9" y="20.4" width="4.2" height="2.2"/><rect x="25.6" y="20.4" width="4.2" height="2.2"/><rect x="2.4" y="26.9" width="4.2" height="2.2"/><rect x="10.2" y="26.9" width="4.2" height="2.2"/><rect x="17.9" y="26.9" width="4.2" height="2.2"/><rect x="25.6" y="26.9" width="4.2" height="2.2"/></g></svg><div class="c2"></div><div class="c3"></div><div class="c4"></div><div class="c5"></div></div>
</body></html>
